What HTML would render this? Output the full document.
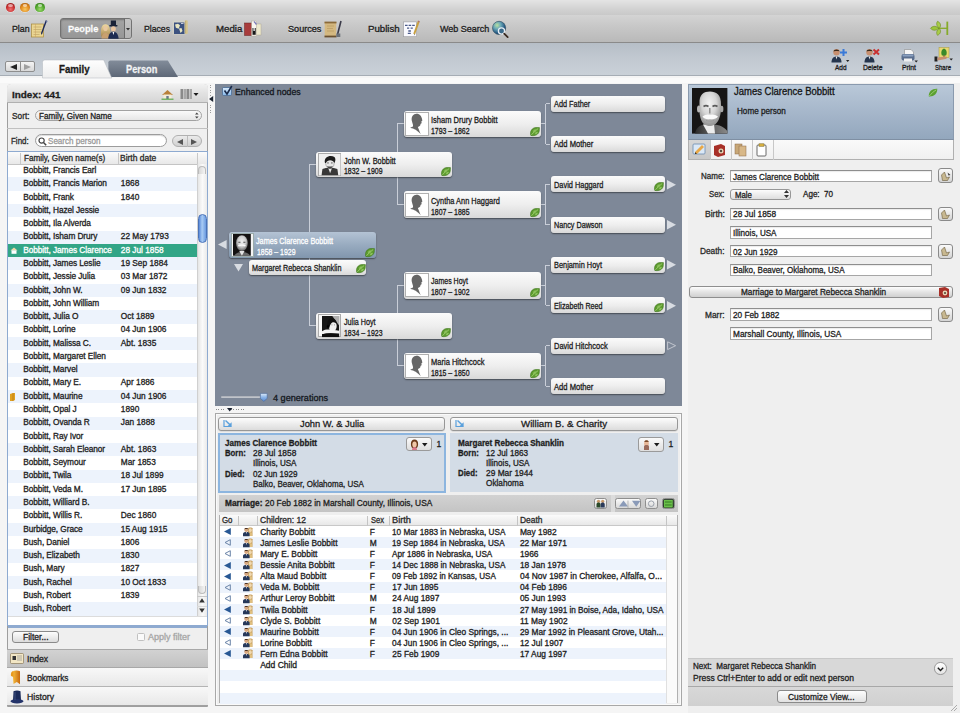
<!DOCTYPE html><html><head><meta charset="utf-8"><style>
*{margin:0;padding:0;box-sizing:border-box}
html,body{width:960px;height:713px;overflow:hidden;background:#f5f5f5;font-family:"Liberation Sans",sans-serif;color:#1e1e1e}
.ab{position:absolute}
.t{position:absolute;white-space:nowrap;line-height:1;transform-origin:0 50%;-webkit-text-stroke:0.3px currentColor}
svg{position:absolute;overflow:visible}
</style></head><body><div class="ab" style="left:0.00px;top:0.00px;width:960.00px;height:15.60px;background:linear-gradient(#e4e4e4,#d2d2d2 60%,#c9c9c9);border-bottom:1.2px solid #8c8c8c"></div><div class="ab" style="left:5.7px;top:2.8px;width:9.6px;height:9.6px;border-radius:50%;background:radial-gradient(circle at 50% 70%,#f07070 0,#c42a2a 55%,#7a1414 100%);box-shadow:0 0.5px 0.5px rgba(255,255,255,.6)"></div><div class="ab" style="left:8.2px;top:3.6px;width:4.6px;height:3px;border-radius:50%;background:rgba(255,255,255,.55)"></div><div class="ab" style="left:20.4px;top:2.8px;width:9.6px;height:9.6px;border-radius:50%;background:radial-gradient(circle at 50% 70%,#f8c860 0,#e0861a 55%,#8a4a0a 100%);box-shadow:0 0.5px 0.5px rgba(255,255,255,.6)"></div><div class="ab" style="left:22.9px;top:3.6px;width:4.6px;height:3px;border-radius:50%;background:rgba(255,255,255,.55)"></div><div class="ab" style="left:35.2px;top:2.8px;width:9.6px;height:9.6px;border-radius:50%;background:radial-gradient(circle at 50% 70%,#9ada6a 0,#4ea42a 55%,#2a6a14 100%);box-shadow:0 0.5px 0.5px rgba(255,255,255,.6)"></div><div class="ab" style="left:37.7px;top:3.6px;width:4.6px;height:3px;border-radius:50%;background:rgba(255,255,255,.55)"></div><div class="ab" style="left:0.00px;top:15.40px;width:960.00px;height:27.40px;background:linear-gradient(#d4d4d4,#c8c8c8 40%,#b9b9b9);border-bottom:1.4px solid #8a8a8a"></div><div class="ab" style="left:60.00px;top:18.00px;width:71.70px;height:21.40px;border-radius:3px;background:linear-gradient(#a4a4a4,#979797);border:1px solid #727272;box-shadow:inset 0 1px 2px rgba(0,0,0,.3),0 1px 0 rgba(255,255,255,.4)"></div><div class="ab" style="left:124.60px;top:19.00px;width:6.60px;height:19.40px;border-radius:0 2px 2px 0;background:linear-gradient(#c4c4c4,#b4b4b4)"></div><div class="ab" style="left:124.30px;top:19.00px;width:0.80px;height:19.40px;background:#6a6a6a"></div><svg style="left:126.00px;top:27.50px;" width="4.00" height="3.00" viewBox="0 0 4.00 3.00"><path d="M0 0h4l-2 2.5z" fill="#333"/></svg><div class="t" style="left:11.50px;top:25px;font-size:9.3px;font-weight:400;color:#222;transform:scaleX(0.940);text-shadow:0 0.5px 0 rgba(255,255,255,.5);-webkit-text-stroke:0.35px #222;">Plan</div><div class="t" style="left:67.70px;top:25px;font-size:9.3px;font-weight:700;color:#fff;transform:scaleX(0.994);text-shadow:0 -0.5px 0 rgba(0,0,0,.4);">People</div><div class="t" style="left:143.70px;top:25px;font-size:9.3px;font-weight:400;color:#222;transform:scaleX(0.932);text-shadow:0 0.5px 0 rgba(255,255,255,.5);-webkit-text-stroke:0.35px #222;">Places</div><div class="t" style="left:216.00px;top:25px;font-size:9.3px;font-weight:400;color:#222;transform:scaleX(1.038);text-shadow:0 0.5px 0 rgba(255,255,255,.5);-webkit-text-stroke:0.35px #222;">Media</div><div class="t" style="left:288.30px;top:25px;font-size:9.3px;font-weight:400;color:#222;transform:scaleX(0.979);text-shadow:0 0.5px 0 rgba(255,255,255,.5);-webkit-text-stroke:0.35px #222;">Sources</div><div class="t" style="left:368.30px;top:25px;font-size:9.3px;font-weight:400;color:#222;transform:scaleX(1.039);text-shadow:0 0.5px 0 rgba(255,255,255,.5);-webkit-text-stroke:0.35px #222;">Publish</div><div class="t" style="left:440.00px;top:25px;font-size:9.3px;font-weight:400;color:#222;transform:scaleX(0.967);text-shadow:0 0.5px 0 rgba(255,255,255,.5);-webkit-text-stroke:0.35px #222;">Web Search</div><svg style="left:31.00px;top:19.50px;" width="17.00" height="18.00" viewBox="0 0 17.00 18.00"><rect x="0.6" y="4" width="12" height="13" fill="#ead592" stroke="#a88a3a" stroke-width=".7"/><path d="M2.5 7h8M2.5 9.5h8M2.5 12h8M2.5 14.5h6" stroke="#c0a868" stroke-width=".7"/><path d="M4.5 4v13" stroke="#c8a060" stroke-width=".5"/><path d="M16 0.8l-4.6 12.5-1.4 1.6.1-2.2 4.6-12.5z" fill="#1e2a5a"/><path d="M15.6 0.5l1 .4-.6 1.6-1-.4z" fill="#6a7aa8"/></svg><svg style="left:100.00px;top:19.50px;" width="19.00" height="19.00" viewBox="0 0 19.00 19.00"><defs><linearGradient id="hb" x1="0" y1="0" x2="0" y2="1"><stop offset="0" stop-color="#f0dca0"/><stop offset="1" stop-color="#a88850"/></linearGradient></defs><path d="M1.2 16.5C0.5 10 1 4.2 5.5 4.2S10.5 10 9.8 16.5z" fill="url(#hb)"/><ellipse cx="5.5" cy="8.2" rx="2.2" ry="2.8" fill="#e8c8a0"/><path d="M1.5 18.5c.5-4 2-5.5 4-5.5s3.5 1.5 4 5.5z" fill="#c8a070"/><rect x="10.8" y="0.5" width="5.2" height="5" fill="#1a2238"/><rect x="9.3" y="5" width="8.2" height="1.4" rx=".6" fill="#1a2238"/><ellipse cx="13.4" cy="8.9" rx="2.4" ry="2.7" fill="#e8c4a0"/><path d="M8.2 18.8c.3-4.8 2.3-7 5.2-7s4.9 2.2 5.2 7z" fill="#1e2c52"/><path d="M12.5 11.9h1.8l-.9 3.2z" fill="#fff"/></svg><svg style="left:170.00px;top:19.50px;top:16px" width="18.00" height="17.00" viewBox="0 0 18.00 17.00"><rect x="2.5" y="4.5" width="13" height="14" fill="#d8d8c8" opacity=".6"/><rect x="4" y="6.5" width="10.5" height="11.5" fill="#3c5280"/><path d="M5 8.5l3-.8 2 1.5-1.3 3.5-2.8-1zM9 12.5l2.5-.5 1 3-2 2z" fill="#e8e6c0"/><path d="M11 7.5h2.5" stroke="#e8e8f0" stroke-width=".8"/><rect x="14.8" y="4.3" width="3" height="13.6" rx="1.2" fill="#d6c690"/><path d="M15.6 4.8v12.5" stroke="#a89860" stroke-width=".5"/></svg><svg style="left:240.50px;top:19.50px;top:16px" width="22.00" height="17.00" viewBox="0 0 22.00 17.00"><rect x="11.5" y="6.3" width="4" height="11" fill="#ece8d0" stroke="#b0a890" stroke-width=".4"/><rect x="10.5" y="4.5" width="5.5" height="15.5" fill="#f0f0f0" opacity=".3"/><rect x="3.5" y="7" width="7.5" height="12.5" fill="#a83c3c" stroke="#6a2020" stroke-width=".5"/><rect x="14.5" y="8" width="5.5" height="11" fill="#ece8cc" stroke="#a8a088" stroke-width=".4"/><rect x="10.5" y="5" width="5" height="15" fill="#f8f6f0" stroke="#a09880" stroke-width=".4"/><rect x="11.5" y="12" width="3.2" height="6.8" fill="#181818"/><rect x="12.4" y="12" width="1.4" height="3" fill="#e8e8e8"/><path d="M13 5.5l2.5 3" stroke="#7a7ab8" stroke-width="1.2"/></svg><svg style="left:324.00px;top:19.50px;" width="18.00" height="18.00" viewBox="0 0 18.00 18.00"><rect x="0.7" y="2" width="11.5" height="15" fill="#d4b880"/><rect x="0.5" y="1.6" width="12" height="1.8" fill="#8a6a3a"/><rect x="0.5" y="15.6" width="12" height="1.8" fill="#6a5030"/><path d="M3 6h7M3 8.5h6M3 11h7" stroke="#b89a60" stroke-width=".7"/><path d="M17 1l-3.5 13.5" stroke="#3a3a48" stroke-width="1.6"/><rect x="12.3" y="13.5" width="4" height="3.5" fill="#6a7078"/></svg><svg style="left:402.50px;top:19.50px;" width="18.00" height="18.00" viewBox="0 0 18.00 18.00"><rect x="0.6" y="1.9" width="13" height="14.8" fill="#fafaff" stroke="#9a9aa0" stroke-width=".6"/><path d="M2 5.3h2.6M5.6 5.3h2.6M9.2 5.3h2.6M4 8.2h2.2M7.6 8.2h2.2M5.3 11h2.6M4.8 13.4h3" stroke="#4a5a8a" stroke-width="1.3"/><path d="M15.8 1.2l-4.6 12.8" stroke="#c8a040" stroke-width="2"/><path d="M15.3 0.6l1.4.6-.5 1.2-1.4-.6z" fill="#b07070"/><path d="M11.2 14l-.3 1.6 1-1.2z" fill="#333"/></svg><svg style="left:491.00px;top:19.50px;" width="19.00" height="19.00" viewBox="0 0 19.00 19.00"><defs><radialGradient id="gl" cx=".35" cy=".3" r=".8"><stop offset="0" stop-color="#b8e0a0"/><stop offset=".35" stop-color="#6aa8b8"/><stop offset=".8" stop-color="#1a4a7a"/><stop offset="1" stop-color="#10304a"/></radialGradient></defs><circle cx="8.1" cy="7.9" r="6.6" fill="url(#gl)" stroke="#2a4a5a" stroke-width=".6"/><circle cx="10.5" cy="11" r="3.1" fill="#3a6a8a" stroke="#e8eef4" stroke-width="1.3"/><path d="M13.2 13.6l3.5 3.5" stroke="#3a2a20" stroke-width="1.8" stroke-linecap="round"/></svg><svg style="left:929.00px;top:20.00px;" width="20.00" height="17.00" viewBox="0 0 20.00 17.00"><path d="M9 8.3h9" stroke="#86aa2a" stroke-width="1.3"/><path d="M18.3 1.6v13.4" stroke="#86aa2a" stroke-width="1.8"/><path d="M1.5 8.3C3.5 5.8 7 5.6 10 8.3 7 11 3.5 10.8 1.5 8.3z" fill="#9cc43a" stroke="#6a8a1a" stroke-width=".6"/><path d="M10.5 8C7.5 6.5 7 3.5 8.5 1.3 11.5 2.6 12.5 5.5 10.5 8z" fill="#a8cc48" stroke="#6a8a1a" stroke-width=".6"/><path d="M10.5 8.6C7.5 10.1 7 13.1 8.5 15.3 11.5 14 12.5 11.1 10.5 8.6z" fill="#a8cc48" stroke="#6a8a1a" stroke-width=".6"/></svg><div class="ab" style="left:0.00px;top:42.80px;width:960.00px;height:33.20px;background:linear-gradient(#b6bec7,#c2c9d1 50%,#cad1d8);border-bottom:1.6px solid #a6adb5"></div><div class="ab" style="left:0.00px;top:77.60px;width:960.00px;height:5.00px;background:#fafafa"></div><div class="ab" style="left:5.20px;top:61.00px;width:30.20px;height:11.00px;border-radius:2px;background:linear-gradient(#f4f4f4,#d8d8d8);border:1px solid #8e8e8e"></div><div class="ab" style="left:20.20px;top:61.50px;width:0.80px;height:10.00px;background:#8e8e8e"></div><svg style="left:9.50px;top:63.50px;" width="8.00" height="6.00" viewBox="0 0 8.00 6.00"><path d="M7 0v6L0 3z" fill="#222"/></svg><svg style="left:24.00px;top:63.50px;" width="8.00" height="6.00" viewBox="0 0 8.00 6.00"><path d="M0 0v6l7-3z" fill="#a0a0a0"/></svg><svg style="left:0;top:0" width="960" height="80" viewBox="0 0 960 80"><defs><linearGradient id="gf" x1="0" y1="0" x2="0" y2="1"><stop offset="0" stop-color="#fefefe"/><stop offset="1" stop-color="#eeeeee"/></linearGradient><linearGradient id="gp" x1="0" y1="0" x2="0" y2="1"><stop offset="0" stop-color="#828c9a"/><stop offset="1" stop-color="#5e6877"/></linearGradient></defs><path d="M108.4 77V62.3Q108.4 60.5 110.4 60.5H167.8L178 77z" fill="url(#gp)"/><path d="M42.5 78V62.2Q42.5 60 44.7 60H103.7L111.8 78z" fill="url(#gf)" stroke="#b0b6bd" stroke-width=".5"/></svg><div class="t" style="left:59.40px;top:65px;font-size:10px;font-weight:700;color:#1a1a1a;transform:scaleX(0.966);">Family</div><div class="t" style="left:126.00px;top:65px;font-size:10px;font-weight:700;color:#f4f6f8;transform:scaleX(0.923);text-shadow:0 -0.5px 0 rgba(0,0,0,.35);">Person</div><svg style="left:831.00px;top:47.50px;" width="19.00" height="15.00" viewBox="0 0 19.00 15.00"><circle cx="5.5" cy="4.2" r="3.2" fill="#c89070"/><path d="M2.5 3.5c0-2.8 6-2.8 6 0c-1-.8-5-.8-6 0z" fill="#3a2a1a"/><path d="M0.5 14.5c0-4 2-6 5-6s5 2 5 6z" fill="#26364e"/><path d="M4.6 8.6l.9 3 .9-3z" fill="#e8e8e8"/><path d="M12.5 1v7M9 4.5h7" stroke="#3a7ad8" stroke-width="2"/><path d="M15 12h3.4l-1.7 2z" fill="#222"/></svg><div class="t" style="left:834.50px;top:64px;font-size:7.8px;font-weight:400;color:#1a1a1a;transform:scaleX(0.829);">Add</div><svg style="left:864.00px;top:47.50px;" width="19.00" height="15.00" viewBox="0 0 19.00 15.00"><circle cx="5.5" cy="4.2" r="3.2" fill="#c89070"/><path d="M2.5 3.5c0-2.8 6-2.8 6 0c-1-.8-5-.8-6 0z" fill="#3a2a1a"/><path d="M0.5 14.5c0-4 2-6 5-6s5 2 5 6z" fill="#26364e"/><path d="M4.6 8.6l.9 3 .9-3z" fill="#e8e8e8"/><path d="M9.5 1.5l5.5 5M15 1.5l-5.5 5" stroke="#c83030" stroke-width="2"/></svg><div class="t" style="left:863.00px;top:64px;font-size:7.8px;font-weight:400;color:#1a1a1a;transform:scaleX(0.865);">Delete</div><svg style="left:900.50px;top:48.50px;" width="17.00" height="14.00" viewBox="0 0 17.00 14.00"><path d="M3.5 0.5h6.5l2.5 2.5v3h-9z" fill="#f6f6f6" stroke="#8a8a8a" stroke-width=".6"/><rect x="0.5" y="5" width="13" height="6.5" rx="2" fill="#5a6e8e"/><rect x="1.5" y="5.5" width="11" height="2" rx="1" fill="#8aa0c0"/><rect x="3" y="9.5" width="8" height="3" fill="#f0f0f0"/><path d="M13.5 11.5h3.4l-1.7 2z" fill="#222"/></svg><div class="t" style="left:901.50px;top:64px;font-size:7.8px;font-weight:400;color:#1a1a1a;transform:scaleX(0.872);">Print</div><svg style="left:933.50px;top:47.00px;" width="19.00" height="16.00" viewBox="0 0 19.00 16.00"><rect x="5" y="0.5" width="10" height="10" fill="#e8d870" stroke="#a89a40" stroke-width=".5"/><path d="M10 1.5c-2.5 1-3.5 4-2 7h4c1.5-3 .5-6-2-7z" fill="#3a8a2a"/><path d="M10 8v3" stroke="#6a4a2a" stroke-width="1"/><path d="M0.5 9.5h3v5h-3z" fill="#222"/><path d="M3.5 10.5c3 0 5-1 8-1 2 0 2 2 0 2.5l-8 1.5z" fill="#c89070"/><path d="M15.5 11.5h3.4l-1.7 2z" fill="#222"/></svg><div class="t" style="left:935.00px;top:64px;font-size:7.8px;font-weight:400;color:#1a1a1a;transform:scaleX(0.769);">Share</div><div class="ab" style="left:6.50px;top:83.50px;width:201.50px;height:623.20px;background:#efefef;border:1px solid #9e9e9e;border-radius:4px 4px 0 0"></div><div class="ab" style="left:7.00px;top:84.00px;width:200.50px;height:19.00px;background:linear-gradient(#f2f2f2,#e2e2e2 50%,#d6d6d6);border-bottom:1px solid #b0b0b0;border-radius:4px 4px 0 0"></div><div class="t" style="left:11.70px;top:90px;font-size:9.5px;font-weight:700;color:#1e1e1e;transform:scaleX(1.044);">Index: 441</div><svg style="left:160.50px;top:88.50px;" width="13.00" height="11.00" viewBox="0 0 13.00 11.00"><path d="M1 6L6.5 1 12 6z" fill="#b8803a"/><rect x="2.5" y="5.5" width="8" height="4.5" fill="#f4ecd8"/><rect x="5.3" y="7" width="2.4" height="3" fill="#6a7a8a"/><rect x="0.5" y="9.6" width="12" height="1.2" fill="#5aa84a"/></svg><svg style="left:179.50px;top:89.00px;" width="19.00" height="10.00" viewBox="0 0 19.00 10.00"><rect x="0.5" y="0" width="2.5" height="10" fill="#8a8a8a"/><rect x="3.5" y="0" width="2.5" height="10" fill="#a8a8a8"/><rect x="6.5" y="0" width="2.5" height="10" fill="#8a8a8a"/><rect x="9.5" y="0" width="2.5" height="10" fill="#a8a8a8"/><path d="M13.5 4h5l-2.5 3z" fill="#1a1a1a"/></svg><div class="t" style="left:11.70px;top:112px;font-size:8.3px;font-weight:400;color:#2a2a2a;transform:scaleX(1.004);">Sort:</div><div class="ab" style="left:34.50px;top:110.30px;width:167.00px;height:10.50px;border-radius:6px;background:linear-gradient(#fafafa,#e6e6e6);border:1px solid #a2a2a2"></div><div class="t" style="left:39.20px;top:112px;font-size:8.3px;font-weight:400;color:#1e1e1e;transform:scaleX(0.977);">Family, Given Name</div><svg style="left:194.80px;top:112.30px;" width="3.60" height="7.00" viewBox="0 0 3.60 7.00"><path d="M0 2.6l1.8-2.2 1.8 2.2zM0 4.4l1.8 2.2 1.8-2.2z" fill="#444"/></svg><div class="ab" style="left:7.00px;top:128.00px;width:200.50px;height:1.00px;background:#c0c0c0"></div><div class="t" style="left:11.00px;top:137px;font-size:8.3px;font-weight:400;color:#2a2a2a;transform:scaleX(0.959);">Find:</div><div class="ab" style="left:34.50px;top:134.40px;width:132.00px;height:12.90px;border-radius:7px;background:#fff;border:1px solid #9c9c9c;box-shadow:inset 0 1px 1px rgba(0,0,0,.15)"></div><svg style="left:37.50px;top:136.80px;" width="9.00" height="9.00" viewBox="0 0 9.00 9.00"><circle cx="3.6" cy="3.6" r="2.6" stroke="#444" stroke-width="1.2" fill="none"/><path d="M5.5 5.5l2.7 2.7" stroke="#444" stroke-width="1.5"/></svg><div class="t" style="left:47.80px;top:137px;font-size:8.3px;font-weight:400;color:#9a9a9a;transform:scaleX(0.973);">Search person</div><div class="ab" style="left:172.00px;top:135.00px;width:29.70px;height:12.30px;border-radius:6px;background:linear-gradient(#ebebeb,#d0d0d0);border:1px solid #b0b0b0"></div><div class="ab" style="left:186.80px;top:135.50px;width:0.70px;height:11.30px;background:#bcbcbc"></div><svg style="left:176.50px;top:138.50px;" width="6.00" height="6.00" viewBox="0 0 6.00 6.00"><path d="M6 0v6L0 3z" fill="#555"/></svg><svg style="left:190.50px;top:138.50px;" width="6.00" height="6.00" viewBox="0 0 6.00 6.00"><path d="M0 0v6l6-3z" fill="#555"/></svg><div class="ab" style="left:6.50px;top:151.20px;width:201.50px;height:475.30px;background:#fff;border:1.2px solid #8eaad0"></div><div class="ab" style="left:7.50px;top:152.30px;width:199.50px;height:12.40px;background:linear-gradient(#fbfbfb,#e8e8e8);border-bottom:1px solid #c4c4c4"></div><div class="ab" style="left:20.30px;top:153.00px;width:0.70px;height:11.00px;background:#c8c8c8"></div><div class="ab" style="left:118.00px;top:153.00px;width:0.70px;height:11.00px;background:#c8c8c8"></div><div class="ab" style="left:196.80px;top:153.00px;width:0.70px;height:11.00px;background:#c8c8c8"></div><div class="t" style="left:23.80px;top:154px;font-size:8.3px;font-weight:400;color:#2a2a2a;transform:scaleX(0.980);">Family, Given name(s)</div><div class="t" style="left:119.70px;top:154px;font-size:8.3px;font-weight:400;color:#2a2a2a;transform:scaleX(1.019);">Birth date</div><div class="t" style="left:23.30px;top:166px;font-size:8.3px;font-weight:400;color:#1e1e1e;letter-spacing:-0.08px;">Bobbitt, Francis Earl</div><div class="ab" style="left:7.50px;top:177.48px;width:189.30px;height:13.28px;background:#edf3fc"></div><div class="t" style="left:23.30px;top:179px;font-size:8.3px;font-weight:400;color:#1e1e1e;letter-spacing:-0.08px;">Bobbitt, Francis Marion</div><div class="t" style="left:120.80px;top:179px;font-size:8.3px;font-weight:400;color:#1e1e1e;">1868</div><div class="t" style="left:23.30px;top:193px;font-size:8.3px;font-weight:400;color:#1e1e1e;letter-spacing:-0.08px;">Bobbitt, Frank</div><div class="t" style="left:120.80px;top:193px;font-size:8.3px;font-weight:400;color:#1e1e1e;">1840</div><div class="ab" style="left:7.50px;top:204.04px;width:189.30px;height:13.28px;background:#edf3fc"></div><div class="t" style="left:23.30px;top:206px;font-size:8.3px;font-weight:400;color:#1e1e1e;letter-spacing:-0.08px;">Bobbitt, Hazel Jessie</div><div class="t" style="left:23.30px;top:219px;font-size:8.3px;font-weight:400;color:#1e1e1e;letter-spacing:-0.08px;">Bobbitt, Ila Alverda</div><div class="ab" style="left:7.50px;top:230.60px;width:189.30px;height:13.28px;background:#edf3fc"></div><div class="t" style="left:23.30px;top:232px;font-size:8.3px;font-weight:400;color:#1e1e1e;letter-spacing:-0.08px;">Bobbitt, Isham Drury</div><div class="t" style="left:120.80px;top:232px;font-size:8.3px;font-weight:400;color:#1e1e1e;">22 May 1793</div><div class="ab" style="left:7.50px;top:243.88px;width:189.30px;height:13.28px;background:#32a586"></div><div class="t" style="left:23.30px;top:246px;font-size:8.3px;font-weight:400;color:#ffffff;letter-spacing:-0.08px;">Bobbitt, James Clarence</div><div class="t" style="left:120.80px;top:246px;font-size:8.3px;font-weight:400;color:#ffffff;">28 Jul 1858</div><div class="ab" style="left:7.50px;top:257.16px;width:189.30px;height:13.28px;background:#edf3fc"></div><div class="t" style="left:23.30px;top:259px;font-size:8.3px;font-weight:400;color:#1e1e1e;letter-spacing:-0.08px;">Bobbitt, James Leslie</div><div class="t" style="left:120.80px;top:259px;font-size:8.3px;font-weight:400;color:#1e1e1e;">19 Sep 1884</div><div class="t" style="left:23.30px;top:272px;font-size:8.3px;font-weight:400;color:#1e1e1e;letter-spacing:-0.08px;">Bobbitt, Jessie Julia</div><div class="t" style="left:120.80px;top:272px;font-size:8.3px;font-weight:400;color:#1e1e1e;">03 Mar 1872</div><div class="ab" style="left:7.50px;top:283.72px;width:189.30px;height:13.28px;background:#edf3fc"></div><div class="t" style="left:23.30px;top:286px;font-size:8.3px;font-weight:400;color:#1e1e1e;letter-spacing:-0.08px;">Bobbitt, John W.</div><div class="t" style="left:120.80px;top:286px;font-size:8.3px;font-weight:400;color:#1e1e1e;">09 Jun 1832</div><div class="t" style="left:23.30px;top:299px;font-size:8.3px;font-weight:400;color:#1e1e1e;letter-spacing:-0.08px;">Bobbitt, John William</div><div class="ab" style="left:7.50px;top:310.28px;width:189.30px;height:13.28px;background:#edf3fc"></div><div class="t" style="left:23.30px;top:312px;font-size:8.3px;font-weight:400;color:#1e1e1e;letter-spacing:-0.08px;">Bobbitt, Julia O</div><div class="t" style="left:120.80px;top:312px;font-size:8.3px;font-weight:400;color:#1e1e1e;">Oct 1889</div><div class="t" style="left:23.30px;top:325px;font-size:8.3px;font-weight:400;color:#1e1e1e;letter-spacing:-0.08px;">Bobbitt, Lorine</div><div class="t" style="left:120.80px;top:325px;font-size:8.3px;font-weight:400;color:#1e1e1e;">04 Jun 1906</div><div class="ab" style="left:7.50px;top:336.84px;width:189.30px;height:13.28px;background:#edf3fc"></div><div class="t" style="left:23.30px;top:339px;font-size:8.3px;font-weight:400;color:#1e1e1e;letter-spacing:-0.08px;">Bobbitt, Malissa C.</div><div class="t" style="left:120.80px;top:339px;font-size:8.3px;font-weight:400;color:#1e1e1e;">Abt. 1835</div><div class="t" style="left:23.30px;top:352px;font-size:8.3px;font-weight:400;color:#1e1e1e;letter-spacing:-0.08px;">Bobbitt, Margaret Ellen</div><div class="ab" style="left:7.50px;top:363.40px;width:189.30px;height:13.28px;background:#edf3fc"></div><div class="t" style="left:23.30px;top:365px;font-size:8.3px;font-weight:400;color:#1e1e1e;letter-spacing:-0.08px;">Bobbitt, Marvel</div><div class="t" style="left:23.30px;top:378px;font-size:8.3px;font-weight:400;color:#1e1e1e;letter-spacing:-0.08px;">Bobbitt, Mary E.</div><div class="t" style="left:120.80px;top:378px;font-size:8.3px;font-weight:400;color:#1e1e1e;">Apr 1886</div><div class="ab" style="left:7.50px;top:389.96px;width:189.30px;height:13.28px;background:#edf3fc"></div><div class="t" style="left:23.30px;top:392px;font-size:8.3px;font-weight:400;color:#1e1e1e;letter-spacing:-0.08px;">Bobbitt, Maurine</div><div class="t" style="left:120.80px;top:392px;font-size:8.3px;font-weight:400;color:#1e1e1e;">04 Jun 1906</div><div class="t" style="left:23.30px;top:405px;font-size:8.3px;font-weight:400;color:#1e1e1e;letter-spacing:-0.08px;">Bobbitt, Opal J</div><div class="t" style="left:120.80px;top:405px;font-size:8.3px;font-weight:400;color:#1e1e1e;">1890</div><div class="ab" style="left:7.50px;top:416.52px;width:189.30px;height:13.28px;background:#edf3fc"></div><div class="t" style="left:23.30px;top:418px;font-size:8.3px;font-weight:400;color:#1e1e1e;letter-spacing:-0.08px;">Bobbitt, Ovanda R</div><div class="t" style="left:120.80px;top:418px;font-size:8.3px;font-weight:400;color:#1e1e1e;">Jan 1888</div><div class="t" style="left:23.30px;top:432px;font-size:8.3px;font-weight:400;color:#1e1e1e;letter-spacing:-0.08px;">Bobbitt, Ray Ivor</div><div class="ab" style="left:7.50px;top:443.08px;width:189.30px;height:13.28px;background:#edf3fc"></div><div class="t" style="left:23.30px;top:445px;font-size:8.3px;font-weight:400;color:#1e1e1e;letter-spacing:-0.08px;">Bobbitt, Sarah Eleanor</div><div class="t" style="left:120.80px;top:445px;font-size:8.3px;font-weight:400;color:#1e1e1e;">Abt. 1863</div><div class="t" style="left:23.30px;top:458px;font-size:8.3px;font-weight:400;color:#1e1e1e;letter-spacing:-0.08px;">Bobbitt, Seymour</div><div class="t" style="left:120.80px;top:458px;font-size:8.3px;font-weight:400;color:#1e1e1e;">Mar 1853</div><div class="ab" style="left:7.50px;top:469.64px;width:189.30px;height:13.28px;background:#edf3fc"></div><div class="t" style="left:23.30px;top:471px;font-size:8.3px;font-weight:400;color:#1e1e1e;letter-spacing:-0.08px;">Bobbitt, Twila</div><div class="t" style="left:120.80px;top:471px;font-size:8.3px;font-weight:400;color:#1e1e1e;">18 Jul 1899</div><div class="t" style="left:23.30px;top:485px;font-size:8.3px;font-weight:400;color:#1e1e1e;letter-spacing:-0.08px;">Bobbitt, Veda M.</div><div class="t" style="left:120.80px;top:485px;font-size:8.3px;font-weight:400;color:#1e1e1e;">17 Jun 1895</div><div class="ab" style="left:7.50px;top:496.20px;width:189.30px;height:13.28px;background:#edf3fc"></div><div class="t" style="left:23.30px;top:498px;font-size:8.3px;font-weight:400;color:#1e1e1e;letter-spacing:-0.08px;">Bobbitt, Williard B.</div><div class="t" style="left:23.30px;top:511px;font-size:8.3px;font-weight:400;color:#1e1e1e;letter-spacing:-0.08px;">Bobbitt, Willis R.</div><div class="t" style="left:120.80px;top:511px;font-size:8.3px;font-weight:400;color:#1e1e1e;">Dec 1860</div><div class="ab" style="left:7.50px;top:522.76px;width:189.30px;height:13.28px;background:#edf3fc"></div><div class="t" style="left:23.30px;top:525px;font-size:8.3px;font-weight:400;color:#1e1e1e;letter-spacing:-0.08px;">Burbidge, Grace</div><div class="t" style="left:120.80px;top:525px;font-size:8.3px;font-weight:400;color:#1e1e1e;">15 Aug 1915</div><div class="t" style="left:23.30px;top:538px;font-size:8.3px;font-weight:400;color:#1e1e1e;letter-spacing:-0.08px;">Bush, Daniel</div><div class="t" style="left:120.80px;top:538px;font-size:8.3px;font-weight:400;color:#1e1e1e;">1806</div><div class="ab" style="left:7.50px;top:549.32px;width:189.30px;height:13.28px;background:#edf3fc"></div><div class="t" style="left:23.30px;top:551px;font-size:8.3px;font-weight:400;color:#1e1e1e;letter-spacing:-0.08px;">Bush, Elizabeth</div><div class="t" style="left:120.80px;top:551px;font-size:8.3px;font-weight:400;color:#1e1e1e;">1830</div><div class="t" style="left:23.30px;top:564px;font-size:8.3px;font-weight:400;color:#1e1e1e;letter-spacing:-0.08px;">Bush, Mary</div><div class="t" style="left:120.80px;top:564px;font-size:8.3px;font-weight:400;color:#1e1e1e;">1827</div><div class="ab" style="left:7.50px;top:575.88px;width:189.30px;height:13.28px;background:#edf3fc"></div><div class="t" style="left:23.30px;top:578px;font-size:8.3px;font-weight:400;color:#1e1e1e;letter-spacing:-0.08px;">Bush, Rachel</div><div class="t" style="left:120.80px;top:578px;font-size:8.3px;font-weight:400;color:#1e1e1e;">10 Oct 1833</div><div class="t" style="left:23.30px;top:591px;font-size:8.3px;font-weight:400;color:#1e1e1e;letter-spacing:-0.08px;">Bush, Robert</div><div class="t" style="left:120.80px;top:591px;font-size:8.3px;font-weight:400;color:#1e1e1e;">1839</div><div class="ab" style="left:7.50px;top:602.44px;width:189.30px;height:13.28px;background:#edf3fc"></div><div class="t" style="left:23.30px;top:604px;font-size:8.3px;font-weight:400;color:#1e1e1e;letter-spacing:-0.08px;">Bush, Robert</div><svg style="left:9.50px;top:246.50px;" width="8.00" height="7.00" viewBox="0 0 8.00 7.00"><path d="M0.5 3.5L4 0.5 7.5 3.5z" fill="#f0d8a8"/><rect x="1.5" y="3.3" width="5" height="3.5" fill="#fff"/></svg><svg style="left:10.00px;top:392.96px;" width="5.00" height="8.00" viewBox="0 0 5.00 8.00"><path d="M0 1l3-1h2v7l-2 1H0z" fill="#e0a020"/><path d="M3 0v8" stroke="#b07010" stroke-width=".6"/></svg><div class="ab" style="left:196.80px;top:164.40px;width:10.50px;height:451.60px;background:linear-gradient(90deg,#e6e6e6,#fafafa 50%,#eaeaea);border-left:1px solid #d0d0d0"></div><div class="ab" style="left:198.00px;top:166.00px;width:8.00px;height:8.00px;border-radius:4px 4px 0 0;background:linear-gradient(90deg,#d8d8d8,#f4f4f4);border:1px solid #bbb;border-bottom:none"></div><div class="ab" style="left:197.60px;top:213.50px;width:9.00px;height:29.00px;border-radius:4.5px;background:linear-gradient(90deg,#5a8ad8,#a8cbf4 45%,#6a9ae0);border:1px solid #4a72b8"></div><div class="ab" style="left:198.00px;top:586.00px;width:8.00px;height:8.00px;border-radius:0 0 4px 4px;background:linear-gradient(90deg,#d8d8d8,#f4f4f4);border:1px solid #bbb;border-top:none"></div><div class="ab" style="left:197.20px;top:595.50px;width:10.00px;height:0.80px;background:#c8c8c8"></div><svg style="left:199.00px;top:598.00px;" width="6.00" height="5.00" viewBox="0 0 6.00 5.00"><path d="M3 0.3L5.8 4.6H0.2z" fill="#333"/></svg><div class="ab" style="left:197.20px;top:605.80px;width:10.00px;height:0.80px;background:#d8d8d8"></div><svg style="left:199.00px;top:607.50px;" width="6.00" height="5.00" viewBox="0 0 6.00 5.00"><path d="M3 4.7L5.8 0.4H0.2z" fill="#333"/></svg><div class="ab" style="left:7.50px;top:616.00px;width:199.50px;height:0.80px;background:#dcdcdc"></div><div class="ab" style="left:7.50px;top:626.00px;width:199.50px;height:1.60px;background:#8eaad0"></div><div class="ab" style="left:12.40px;top:630.50px;width:46.60px;height:12.10px;border-radius:3px;background:linear-gradient(#fdfdfd,#dcdcdc);border:1px solid #8a8a8a"></div><div class="t" style="left:22.50px;top:633px;font-size:8.3px;font-weight:400;color:#1e1e1e;transform:scaleX(1.024);">Filter...</div><div class="ab" style="left:136.50px;top:632.50px;width:8.00px;height:8.00px;border-radius:1.5px;background:#fafafa;border:1px solid #c0c0c0"></div><div class="t" style="left:148.00px;top:633px;font-size:8.3px;font-weight:400;color:#a6a6a6;transform:scaleX(1.084);">Apply filter</div><div class="ab" style="left:7.00px;top:648.60px;width:200.50px;height:19.00px;background:linear-gradient(#d2d2d2,#c2c2c2);border-top:1px solid #a8a8a8;border-bottom:1px solid #a8a8a8"></div><div class="ab" style="left:7.00px;top:667.60px;width:200.50px;height:19.00px;background:linear-gradient(#f8f8f8,#e8e8e8);border-bottom:1px solid #b4b4b4"></div><div class="ab" style="left:7.00px;top:686.60px;width:200.50px;height:19.40px;background:linear-gradient(#f8f8f8,#e8e8e8);border-bottom:1px solid #a0a0a0"></div><svg style="left:10.00px;top:653.00px;" width="14.00" height="11.00" viewBox="0 0 14.00 11.00"><rect x="0.5" y="0.5" width="13" height="10" rx="1" fill="#f2e6c4" stroke="#8a7a5a" stroke-width=".7"/><rect x="2.5" y="3" width="3.5" height="4" fill="#333"/><path d="M7 3h5M7 5h5M7 7h5" stroke="#999" stroke-width=".8"/></svg><div class="t" style="left:27.00px;top:655px;font-size:8.6px;font-weight:400;color:#1e1e1e;transform:scaleX(0.999);">Index</div><svg style="left:9.50px;top:670.00px;" width="11.00" height="15.00" viewBox="0 0 11.00 15.00"><defs><linearGradient id="bm" x1="0" y1="0" x2="1" y2="0"><stop offset="0" stop-color="#f8c040"/><stop offset="1" stop-color="#c86a10"/></linearGradient></defs><path d="M2.5 1.2c2.5-1 5.5-1 7.5 0v13l-3.2-2.2L3.5 14z" fill="url(#bm)"/><path d="M2.5 1.2C1 2 0.6 4 1 6l2.5 1V2z" fill="#e89a20"/></svg><div class="t" style="left:27.00px;top:674px;font-size:8.6px;font-weight:400;color:#1e1e1e;transform:scaleX(0.965);">Bookmarks</div><svg style="left:9.50px;top:689.50px;" width="14.00" height="14.00" viewBox="0 0 14.00 14.00"><path d="M3.5 1.2c2-.8 5-.8 7 0l.5 9.5h-8z" fill="#1c2c5a"/><ellipse cx="7" cy="11.2" rx="6.5" ry="2.2" fill="#24346a"/><path d="M5 2v8" stroke="#4a5a8a" stroke-width=".8"/></svg><div class="t" style="left:27.00px;top:693px;font-size:8.6px;font-weight:400;color:#1e1e1e;transform:scaleX(1.009);">History</div><div class="ab" style="left:214.80px;top:83.50px;width:467.00px;height:322.40px;background:#7e8898"></div><div class="ab" style="left:222.30px;top:86.50px;width:9.30px;height:9.30px;border-radius:1.5px;background:linear-gradient(#d6e8fa,#8cbcec);border:1px solid #5a7aa0"></div><svg style="left:223.00px;top:84.50px;" width="10.00" height="11.00" viewBox="0 0 10.00 11.00"><path d="M1.5 5.5l2.5 3.5L8.8 1" stroke="#1a2a4a" stroke-width="1.6" fill="none"/></svg><div class="t" style="left:234.50px;top:88px;font-size:8.8px;font-weight:400;color:#141820;transform:scaleX(0.995);">Enhanced nodes</div><div class="ab" style="left:545.10px;top:103.70px;width:1.00px;height:40.35px;background:#c9ced8"></div><div class="ab" style="left:541.00px;top:123.38px;width:4.60px;height:1.00px;background:#c9ced8"></div><div class="ab" style="left:545.60px;top:103.20px;width:4.90px;height:1.00px;background:#c9ced8"></div><div class="ab" style="left:545.60px;top:143.55px;width:4.90px;height:1.00px;background:#c9ced8"></div><div class="ab" style="left:545.10px;top:184.40px;width:1.00px;height:40.35px;background:#c9ced8"></div><div class="ab" style="left:541.00px;top:204.07px;width:4.60px;height:1.00px;background:#c9ced8"></div><div class="ab" style="left:545.60px;top:183.90px;width:4.90px;height:1.00px;background:#c9ced8"></div><div class="ab" style="left:545.60px;top:224.25px;width:4.90px;height:1.00px;background:#c9ced8"></div><div class="ab" style="left:545.10px;top:265.10px;width:1.00px;height:40.35px;background:#c9ced8"></div><div class="ab" style="left:541.00px;top:284.77px;width:4.60px;height:1.00px;background:#c9ced8"></div><div class="ab" style="left:545.60px;top:264.60px;width:4.90px;height:1.00px;background:#c9ced8"></div><div class="ab" style="left:545.60px;top:304.95px;width:4.90px;height:1.00px;background:#c9ced8"></div><div class="ab" style="left:545.10px;top:345.80px;width:1.00px;height:40.35px;background:#c9ced8"></div><div class="ab" style="left:541.00px;top:365.48px;width:4.60px;height:1.00px;background:#c9ced8"></div><div class="ab" style="left:545.60px;top:345.30px;width:4.90px;height:1.00px;background:#c9ced8"></div><div class="ab" style="left:545.60px;top:385.65px;width:4.90px;height:1.00px;background:#c9ced8"></div><div class="ab" style="left:396.50px;top:123.88px;width:1.00px;height:80.70px;background:#c9ced8"></div><div class="ab" style="left:397.00px;top:123.38px;width:6.60px;height:1.00px;background:#c9ced8"></div><div class="ab" style="left:397.00px;top:204.07px;width:6.60px;height:1.00px;background:#c9ced8"></div><div class="ab" style="left:396.50px;top:285.27px;width:1.00px;height:80.70px;background:#c9ced8"></div><div class="ab" style="left:397.00px;top:284.77px;width:6.60px;height:1.00px;background:#c9ced8"></div><div class="ab" style="left:397.00px;top:365.48px;width:6.60px;height:1.00px;background:#c9ced8"></div><div class="ab" style="left:308.50px;top:164.22px;width:1.00px;height:161.40px;background:#c9ced8"></div><div class="ab" style="left:309.00px;top:163.72px;width:7.00px;height:1.00px;background:#c9ced8"></div><div class="ab" style="left:309.00px;top:325.12px;width:7.00px;height:1.00px;background:#c9ced8"></div><div class="ab" style="left:228.70px;top:231.60px;width:147.30px;height:26.30px;border-radius:3px;background:linear-gradient(#b4c3d4,#98abc0 50%,#8196ad);box-shadow:0 1px 1.5px rgba(0,0,0,.45);"></div><div class="ab" style="left:230.50px;top:232.90px;width:23.40px;height:23.70px;background:#f4f4f4;border:.6px solid #9aa"></div><svg style="left:233.30px;top:233.90px;" width="17.80" height="21.70" viewBox="0 0 17.80 21.70"><defs><radialGradient id="jcf" cx=".5" cy=".4" r=".55"><stop offset="0" stop-color="#f0f0f0"/><stop offset=".6" stop-color="#cfcfcf"/><stop offset="1" stop-color="#777"/></radialGradient></defs><rect width="17.799999999999997" height="21.69999999999998" fill="#141212"/><path d="M1.7799999999999998 21.69999999999998C2.6699999999999995 16.925999999999988 15.129999999999997 16.925999999999988 16.909999999999997 21.69999999999998z" fill="#6a6a6a"/><path d="M6.229999999999999 16.925999999999988L8.899999999999999 21.69999999999998 11.569999999999999 16.925999999999988z" fill="#e4e4e4"/><ellipse cx="8.899999999999999" cy="9.113999999999992" rx="5.874" ry="7.811999999999993" fill="url(#jcf)"/><path d="M5.339999999999999 11.934999999999992c1.7799999999999998 -1.084999999999999 5.339999999999999 -1.084999999999999 7.119999999999999 0" stroke="#fafafa" stroke-width="1.5189999999999988" fill="none"/><path d="M5.339999999999999 8.245999999999993h2.1359999999999997M10.323999999999998 8.245999999999993h2.1359999999999997" stroke="#555" stroke-width="1.084999999999999"/></svg><div class="t" style="left:256.20px;top:237px;font-size:9.2px;font-weight:400;color:#fff;transform:scaleX(0.789);">James Clarence Bobbitt</div><div class="t" style="left:256.50px;top:248px;font-size:9.2px;font-weight:400;color:#fff;transform:scaleX(0.754);">1858 – 1929</div><svg style="left:364.80px;top:247.60px;" width="9.60" height="8.80" viewBox="0 0 9.60 8.80"><path d="M0.8 8.4C-0.3 4.5 2 0.6 6 0.6 7.5 0.6 8.8 0.6 9.4 0.6 9.4 1.5 9.4 2.8 9.2 4 8.8 7.2 5.2 9.4 0.8 8.4z" fill="#5e9c30" stroke="#3a721a" stroke-width=".6"/><path d="M1.4 7.8C3.4 5.6 5.6 3.4 8.2 1.5" stroke="#a8d478" stroke-width=".8" fill="none"/><ellipse cx="4.6" cy="3.8" rx="1.8" ry="1.1" transform="rotate(-40 4.6 3.8)" fill="#8cc05c"/><ellipse cx="6.4" cy="6" rx="1.6" ry="1" transform="rotate(-40 6.4 6)" fill="#8cc05c"/></svg><div class="ab" style="left:248.70px;top:260.40px;width:117.30px;height:14.30px;border-radius:3px;background:linear-gradient(#fbfbfb,#eeeeee 50%,#d9d9d9);box-shadow:0 1px 1.5px rgba(0,0,0,.45);"></div><div class="t" style="left:251.80px;top:264px;font-size:9.2px;font-weight:400;color:#1a1a1a;transform:scaleX(0.789);">Margaret Rebecca Shanklin</div><svg style="left:355.80px;top:263.50px;" width="9.60" height="8.80" viewBox="0 0 9.60 8.80"><path d="M0.8 8.4C-0.3 4.5 2 0.6 6 0.6 7.5 0.6 8.8 0.6 9.4 0.6 9.4 1.5 9.4 2.8 9.2 4 8.8 7.2 5.2 9.4 0.8 8.4z" fill="#5e9c30" stroke="#3a721a" stroke-width=".6"/><path d="M1.4 7.8C3.4 5.6 5.6 3.4 8.2 1.5" stroke="#a8d478" stroke-width=".8" fill="none"/><ellipse cx="4.6" cy="3.8" rx="1.8" ry="1.1" transform="rotate(-40 4.6 3.8)" fill="#8cc05c"/><ellipse cx="6.4" cy="6" rx="1.6" ry="1" transform="rotate(-40 6.4 6)" fill="#8cc05c"/></svg><svg style="left:218.00px;top:239.80px;" width="9.00" height="9.00" viewBox="0 0 9.00 9.00"><path d="M8.6 0v9L0 4.5z" fill="#d8dce2"/></svg><svg style="left:234.00px;top:264.00px;" width="9.00" height="8.00" viewBox="0 0 9.00 8.00"><path d="M0 0h9L4.5 7.6z" fill="#d8dce2"/></svg><div class="ab" style="left:316.00px;top:151.60px;width:136.00px;height:25.90px;border-radius:3px;background:linear-gradient(#fbfbfb,#eeeeee 50%,#d9d9d9);box-shadow:0 1px 1.5px rgba(0,0,0,.45);"></div><div class="ab" style="left:317.80px;top:152.90px;width:23.40px;height:23.30px;background:#f8f8f8;border:.6px solid #aaa"></div><svg style="left:318.80px;top:153.90px;" width="21.40" height="21.30" viewBox="0 0 21.40 21.30"><rect width="21.4" height="21.300000000000004" fill="#f0f0f0"/><path d="M2.5679999999999996 21.300000000000004L3.424 14.910000000000002C7.489999999999999 13.206000000000003 13.91 13.206000000000003 18.404 14.910000000000002L19.259999999999998 21.300000000000004z" fill="#383838"/><path d="M9.415999999999999 14.484000000000004L11.128 19.170000000000005 12.839999999999998 14.484000000000004z" fill="#e8e8e8"/><ellipse cx="10.914" cy="9.159000000000002" rx="4.28" ry="5.325000000000001" fill="#e6e6e6" stroke="#777" stroke-width=".5"/><path d="M5.992 8.946000000000002C4.28 2.5560000000000005 11.77 0.4260000000000001 15.407999999999998 2.982000000000001C17.12 4.686000000000001 16.264 7.668000000000001 15.407999999999998 8.946000000000002C14.124 5.538000000000001 8.56 5.112000000000001 6.848 8.946000000000002z" fill="#1e1e1e"/><path d="M8.132 8.946000000000002h1.712M11.984 8.946000000000002h1.712" stroke="#555" stroke-width=".9"/><path d="M8.132 11.928000000000004C8.988 15.336000000000002 12.839999999999998 15.336000000000002 13.696 11.928000000000004C11.984 12.780000000000003 9.844 12.780000000000003 8.132 11.928000000000004z" fill="#444"/></svg><div class="t" style="left:343.50px;top:157px;font-size:9.2px;font-weight:400;color:#1a1a1a;transform:scaleX(0.802);">John W. Bobbitt</div><div class="t" style="left:343.80px;top:167px;font-size:9.2px;font-weight:400;color:#1a1a1a;transform:scaleX(0.754);">1832 – 1909</div><svg style="left:440.80px;top:167.20px;" width="9.60" height="8.80" viewBox="0 0 9.60 8.80"><path d="M0.8 8.4C-0.3 4.5 2 0.6 6 0.6 7.5 0.6 8.8 0.6 9.4 0.6 9.4 1.5 9.4 2.8 9.2 4 8.8 7.2 5.2 9.4 0.8 8.4z" fill="#5e9c30" stroke="#3a721a" stroke-width=".6"/><path d="M1.4 7.8C3.4 5.6 5.6 3.4 8.2 1.5" stroke="#a8d478" stroke-width=".8" fill="none"/><ellipse cx="4.6" cy="3.8" rx="1.8" ry="1.1" transform="rotate(-40 4.6 3.8)" fill="#8cc05c"/><ellipse cx="6.4" cy="6" rx="1.6" ry="1" transform="rotate(-40 6.4 6)" fill="#8cc05c"/></svg><div class="ab" style="left:316.00px;top:312.60px;width:136.00px;height:26.10px;border-radius:3px;background:linear-gradient(#fbfbfb,#eeeeee 50%,#d9d9d9);box-shadow:0 1px 1.5px rgba(0,0,0,.45);"></div><div class="ab" style="left:317.80px;top:313.90px;width:23.40px;height:23.50px;background:#f8f8f8;border:.6px solid #aaa"></div><svg style="left:321.70px;top:315.50px;" width="17.10" height="21.10" viewBox="0 0 17.10 21.10"><rect width="17.099999999999998" height="21.099999999999966" fill="#161616"/><path d="M10.259999999999998 0H17.099999999999998V9.494999999999985z" fill="#b0b0b0"/><ellipse cx="10.601999999999999" cy="9.916999999999984" rx="4.103999999999999" ry="5.907999999999991" fill="#efefef"/><path d="M5.129999999999999 10.549999999999983C4.788 3.1649999999999947 8.549999999999999 1.6879999999999973 11.286 2.531999999999996C14.021999999999997 3.3759999999999946 15.047999999999998 6.329999999999989 14.705999999999998 8.439999999999987C12.825 5.063999999999992 8.549999999999999 4.641999999999992 7.181999999999999 12.659999999999979z" fill="#101010"/><circle cx="5.9849999999999985" cy="10.549999999999983" r="1.197" fill="#000"/><path d="M9.405 8.861999999999986h1.0259999999999998M11.969999999999997 8.861999999999986h1.0259999999999998" stroke="#777" stroke-width=".7"/><path d="M0 15.191999999999975C4.2749999999999995 12.23799999999998 10.259999999999998 13.925999999999979 17.099999999999998 14.769999999999975V17.723999999999972C10.259999999999998 16.879999999999974 5.129999999999999 16.879999999999974 0 18.14599999999997z" fill="#f2f2f2"/><path d="M0 18.14599999999997C5.129999999999999 16.879999999999974 10.259999999999998 16.879999999999974 17.099999999999998 17.723999999999972V21.099999999999966H0z" fill="#0e0e0e"/></svg><div class="t" style="left:343.50px;top:318px;font-size:9.2px;font-weight:400;color:#1a1a1a;transform:scaleX(0.781);">Julia Hoyt</div><div class="t" style="left:343.80px;top:329px;font-size:9.2px;font-weight:400;color:#1a1a1a;transform:scaleX(0.754);">1834 – 1923</div><svg style="left:440.80px;top:328.40px;" width="9.60" height="8.80" viewBox="0 0 9.60 8.80"><path d="M0.8 8.4C-0.3 4.5 2 0.6 6 0.6 7.5 0.6 8.8 0.6 9.4 0.6 9.4 1.5 9.4 2.8 9.2 4 8.8 7.2 5.2 9.4 0.8 8.4z" fill="#5e9c30" stroke="#3a721a" stroke-width=".6"/><path d="M1.4 7.8C3.4 5.6 5.6 3.4 8.2 1.5" stroke="#a8d478" stroke-width=".8" fill="none"/><ellipse cx="4.6" cy="3.8" rx="1.8" ry="1.1" transform="rotate(-40 4.6 3.8)" fill="#8cc05c"/><ellipse cx="6.4" cy="6" rx="1.6" ry="1" transform="rotate(-40 6.4 6)" fill="#8cc05c"/></svg><div class="ab" style="left:403.60px;top:110.58px;width:137.40px;height:26.60px;border-radius:3px;background:linear-gradient(#fbfbfb,#eeeeee 50%,#d9d9d9);box-shadow:0 1px 1.5px rgba(0,0,0,.45);"></div><div class="ab" style="left:405.40px;top:111.88px;width:23.40px;height:24.00px;background:#fff;border:.8px solid #b0b0b0"></div><svg style="left:405.40px;top:111.88px;" width="23.40" height="24.00" viewBox="0 0 23.40 24.00"><path d="M15.68 22.32 L12.87 15.12 C14.51 14.40 15.91 13.44 15.44 12.00 L16.85 11.04 L16.15 9.84 L17.32 8.64 C16.85 3.60 14.04 1.20 10.53 1.92 C7.02 2.40 6.08 6.00 7.02 9.60 C7.49 12.00 8.42 13.20 7.96 14.40 L5.15 15.84 C9.36 16.80 12.17 18.24 15.68 22.32Z" fill="#666"/></svg><div class="t" style="left:431.10px;top:116px;font-size:9.2px;font-weight:400;color:#1a1a1a;transform:scaleX(0.819);">Isham Drury Bobbitt</div><div class="t" style="left:431.40px;top:127px;font-size:9.2px;font-weight:400;color:#1a1a1a;transform:scaleX(0.754);">1793 – 1862</div><svg style="left:529.80px;top:126.88px;" width="9.60" height="8.80" viewBox="0 0 9.60 8.80"><path d="M0.8 8.4C-0.3 4.5 2 0.6 6 0.6 7.5 0.6 8.8 0.6 9.4 0.6 9.4 1.5 9.4 2.8 9.2 4 8.8 7.2 5.2 9.4 0.8 8.4z" fill="#5e9c30" stroke="#3a721a" stroke-width=".6"/><path d="M1.4 7.8C3.4 5.6 5.6 3.4 8.2 1.5" stroke="#a8d478" stroke-width=".8" fill="none"/><ellipse cx="4.6" cy="3.8" rx="1.8" ry="1.1" transform="rotate(-40 4.6 3.8)" fill="#8cc05c"/><ellipse cx="6.4" cy="6" rx="1.6" ry="1" transform="rotate(-40 6.4 6)" fill="#8cc05c"/></svg><div class="ab" style="left:403.60px;top:191.27px;width:137.40px;height:26.60px;border-radius:3px;background:linear-gradient(#fbfbfb,#eeeeee 50%,#d9d9d9);box-shadow:0 1px 1.5px rgba(0,0,0,.45);"></div><div class="ab" style="left:405.40px;top:192.57px;width:23.40px;height:24.00px;background:#fff;border:.8px solid #b0b0b0"></div><svg style="left:405.40px;top:192.57px;" width="23.40" height="24.00" viewBox="0 0 23.40 24.00"><path d="M15.68 22.32 L12.87 15.12 C14.51 14.40 15.91 13.44 15.44 12.00 L16.85 11.04 L16.15 9.84 L17.32 8.64 C16.85 3.60 14.04 1.20 10.53 1.92 C7.02 2.40 6.08 6.00 7.02 9.60 C7.49 12.00 8.42 13.20 7.96 14.40 L5.15 15.84 C9.36 16.80 12.17 18.24 15.68 22.32Z" fill="#666"/></svg><div class="t" style="left:431.10px;top:197px;font-size:9.2px;font-weight:400;color:#1a1a1a;transform:scaleX(0.806);">Cyntha Ann Haggard</div><div class="t" style="left:431.40px;top:208px;font-size:9.2px;font-weight:400;color:#1a1a1a;transform:scaleX(0.754);">1807 – 1885</div><svg style="left:529.80px;top:207.57px;" width="9.60" height="8.80" viewBox="0 0 9.60 8.80"><path d="M0.8 8.4C-0.3 4.5 2 0.6 6 0.6 7.5 0.6 8.8 0.6 9.4 0.6 9.4 1.5 9.4 2.8 9.2 4 8.8 7.2 5.2 9.4 0.8 8.4z" fill="#5e9c30" stroke="#3a721a" stroke-width=".6"/><path d="M1.4 7.8C3.4 5.6 5.6 3.4 8.2 1.5" stroke="#a8d478" stroke-width=".8" fill="none"/><ellipse cx="4.6" cy="3.8" rx="1.8" ry="1.1" transform="rotate(-40 4.6 3.8)" fill="#8cc05c"/><ellipse cx="6.4" cy="6" rx="1.6" ry="1" transform="rotate(-40 6.4 6)" fill="#8cc05c"/></svg><div class="ab" style="left:403.60px;top:271.97px;width:137.40px;height:26.60px;border-radius:3px;background:linear-gradient(#fbfbfb,#eeeeee 50%,#d9d9d9);box-shadow:0 1px 1.5px rgba(0,0,0,.45);"></div><div class="ab" style="left:405.40px;top:273.27px;width:23.40px;height:24.00px;background:#fff;border:.8px solid #b0b0b0"></div><svg style="left:405.40px;top:273.27px;" width="23.40" height="24.00" viewBox="0 0 23.40 24.00"><path d="M15.68 22.32 L12.87 15.12 C14.51 14.40 15.91 13.44 15.44 12.00 L16.85 11.04 L16.15 9.84 L17.32 8.64 C16.85 3.60 14.04 1.20 10.53 1.92 C7.02 2.40 6.08 6.00 7.02 9.60 C7.49 12.00 8.42 13.20 7.96 14.40 L5.15 15.84 C9.36 16.80 12.17 18.24 15.68 22.32Z" fill="#666"/></svg><div class="t" style="left:431.10px;top:277px;font-size:9.2px;font-weight:400;color:#1a1a1a;transform:scaleX(0.763);">James Hoyt</div><div class="t" style="left:431.40px;top:288px;font-size:9.2px;font-weight:400;color:#1a1a1a;transform:scaleX(0.754);">1807 – 1902</div><svg style="left:529.80px;top:288.27px;" width="9.60" height="8.80" viewBox="0 0 9.60 8.80"><path d="M0.8 8.4C-0.3 4.5 2 0.6 6 0.6 7.5 0.6 8.8 0.6 9.4 0.6 9.4 1.5 9.4 2.8 9.2 4 8.8 7.2 5.2 9.4 0.8 8.4z" fill="#5e9c30" stroke="#3a721a" stroke-width=".6"/><path d="M1.4 7.8C3.4 5.6 5.6 3.4 8.2 1.5" stroke="#a8d478" stroke-width=".8" fill="none"/><ellipse cx="4.6" cy="3.8" rx="1.8" ry="1.1" transform="rotate(-40 4.6 3.8)" fill="#8cc05c"/><ellipse cx="6.4" cy="6" rx="1.6" ry="1" transform="rotate(-40 6.4 6)" fill="#8cc05c"/></svg><div class="ab" style="left:403.60px;top:352.68px;width:137.40px;height:26.60px;border-radius:3px;background:linear-gradient(#fbfbfb,#eeeeee 50%,#d9d9d9);box-shadow:0 1px 1.5px rgba(0,0,0,.45);"></div><div class="ab" style="left:405.40px;top:353.98px;width:23.40px;height:24.00px;background:#fff;border:.8px solid #b0b0b0"></div><svg style="left:405.40px;top:353.98px;" width="23.40" height="24.00" viewBox="0 0 23.40 24.00"><path d="M15.68 22.32 L12.87 15.12 C14.51 14.40 15.91 13.44 15.44 12.00 L16.85 11.04 L16.15 9.84 L17.32 8.64 C16.85 3.60 14.04 1.20 10.53 1.92 C7.02 2.40 6.08 6.00 7.02 9.60 C7.49 12.00 8.42 13.20 7.96 14.40 L5.15 15.84 C9.36 16.80 12.17 18.24 15.68 22.32Z" fill="#666"/></svg><div class="t" style="left:431.10px;top:358px;font-size:9.2px;font-weight:400;color:#1a1a1a;transform:scaleX(0.819);">Maria Hitchcock</div><div class="t" style="left:431.40px;top:369px;font-size:9.2px;font-weight:400;color:#1a1a1a;transform:scaleX(0.754);">1815 – 1850</div><svg style="left:529.80px;top:368.98px;" width="9.60" height="8.80" viewBox="0 0 9.60 8.80"><path d="M0.8 8.4C-0.3 4.5 2 0.6 6 0.6 7.5 0.6 8.8 0.6 9.4 0.6 9.4 1.5 9.4 2.8 9.2 4 8.8 7.2 5.2 9.4 0.8 8.4z" fill="#5e9c30" stroke="#3a721a" stroke-width=".6"/><path d="M1.4 7.8C3.4 5.6 5.6 3.4 8.2 1.5" stroke="#a8d478" stroke-width=".8" fill="none"/><ellipse cx="4.6" cy="3.8" rx="1.8" ry="1.1" transform="rotate(-40 4.6 3.8)" fill="#8cc05c"/><ellipse cx="6.4" cy="6" rx="1.6" ry="1" transform="rotate(-40 6.4 6)" fill="#8cc05c"/></svg><div class="ab" style="left:550.50px;top:95.70px;width:114.80px;height:16.00px;border-radius:3px;background:linear-gradient(#fbfbfb,#eeeeee 50%,#d9d9d9);box-shadow:0 1px 1.5px rgba(0,0,0,.45);"></div><div class="t" style="left:553.80px;top:100px;font-size:9.2px;font-weight:400;color:#1a1a1a;transform:scaleX(0.799);">Add Father</div><div class="ab" style="left:550.50px;top:136.05px;width:114.80px;height:16.00px;border-radius:3px;background:linear-gradient(#fbfbfb,#eeeeee 50%,#d9d9d9);box-shadow:0 1px 1.5px rgba(0,0,0,.45);"></div><div class="t" style="left:553.80px;top:140px;font-size:9.2px;font-weight:400;color:#1a1a1a;transform:scaleX(0.829);">Add Mother</div><div class="ab" style="left:550.50px;top:176.40px;width:114.80px;height:16.00px;border-radius:3px;background:linear-gradient(#fbfbfb,#eeeeee 50%,#d9d9d9);box-shadow:0 1px 1.5px rgba(0,0,0,.45);"></div><div class="t" style="left:553.80px;top:181px;font-size:9.2px;font-weight:400;color:#1a1a1a;transform:scaleX(0.804);">David Haggard</div><svg style="left:654.00px;top:181.60px;" width="9.60" height="8.80" viewBox="0 0 9.60 8.80"><path d="M0.8 8.4C-0.3 4.5 2 0.6 6 0.6 7.5 0.6 8.8 0.6 9.4 0.6 9.4 1.5 9.4 2.8 9.2 4 8.8 7.2 5.2 9.4 0.8 8.4z" fill="#5e9c30" stroke="#3a721a" stroke-width=".6"/><path d="M1.4 7.8C3.4 5.6 5.6 3.4 8.2 1.5" stroke="#a8d478" stroke-width=".8" fill="none"/><ellipse cx="4.6" cy="3.8" rx="1.8" ry="1.1" transform="rotate(-40 4.6 3.8)" fill="#8cc05c"/><ellipse cx="6.4" cy="6" rx="1.6" ry="1" transform="rotate(-40 6.4 6)" fill="#8cc05c"/></svg><svg style="left:667.40px;top:179.70px;" width="9.50" height="9.40" viewBox="0 0 9.50 9.40"><path d="M0 0l9 4.7L0 9.4z" fill="#d8dce2"/></svg><div class="ab" style="left:550.50px;top:216.75px;width:114.80px;height:16.00px;border-radius:3px;background:linear-gradient(#fbfbfb,#eeeeee 50%,#d9d9d9);box-shadow:0 1px 1.5px rgba(0,0,0,.45);"></div><div class="t" style="left:553.80px;top:221px;font-size:9.2px;font-weight:400;color:#1a1a1a;transform:scaleX(0.785);">Nancy Dawson</div><svg style="left:667.40px;top:220.05px;" width="9.50" height="9.40" viewBox="0 0 9.50 9.40"><path d="M0 0l9 4.7L0 9.4z" fill="#d8dce2"/></svg><div class="ab" style="left:550.50px;top:257.10px;width:114.80px;height:16.00px;border-radius:3px;background:linear-gradient(#fbfbfb,#eeeeee 50%,#d9d9d9);box-shadow:0 1px 1.5px rgba(0,0,0,.45);"></div><div class="t" style="left:553.80px;top:261px;font-size:9.2px;font-weight:400;color:#1a1a1a;transform:scaleX(0.803);">Benjamin Hoyt</div><svg style="left:654.00px;top:262.30px;" width="9.60" height="8.80" viewBox="0 0 9.60 8.80"><path d="M0.8 8.4C-0.3 4.5 2 0.6 6 0.6 7.5 0.6 8.8 0.6 9.4 0.6 9.4 1.5 9.4 2.8 9.2 4 8.8 7.2 5.2 9.4 0.8 8.4z" fill="#5e9c30" stroke="#3a721a" stroke-width=".6"/><path d="M1.4 7.8C3.4 5.6 5.6 3.4 8.2 1.5" stroke="#a8d478" stroke-width=".8" fill="none"/><ellipse cx="4.6" cy="3.8" rx="1.8" ry="1.1" transform="rotate(-40 4.6 3.8)" fill="#8cc05c"/><ellipse cx="6.4" cy="6" rx="1.6" ry="1" transform="rotate(-40 6.4 6)" fill="#8cc05c"/></svg><svg style="left:667.40px;top:260.40px;" width="9.50" height="9.40" viewBox="0 0 9.50 9.40"><path d="M0 0l9 4.7L0 9.4z" fill="#d8dce2"/></svg><div class="ab" style="left:550.50px;top:297.45px;width:114.80px;height:16.00px;border-radius:3px;background:linear-gradient(#fbfbfb,#eeeeee 50%,#d9d9d9);box-shadow:0 1px 1.5px rgba(0,0,0,.45);"></div><div class="t" style="left:553.80px;top:302px;font-size:9.2px;font-weight:400;color:#1a1a1a;transform:scaleX(0.778);">Elizabeth Reed</div><svg style="left:654.00px;top:302.65px;" width="9.60" height="8.80" viewBox="0 0 9.60 8.80"><path d="M0.8 8.4C-0.3 4.5 2 0.6 6 0.6 7.5 0.6 8.8 0.6 9.4 0.6 9.4 1.5 9.4 2.8 9.2 4 8.8 7.2 5.2 9.4 0.8 8.4z" fill="#5e9c30" stroke="#3a721a" stroke-width=".6"/><path d="M1.4 7.8C3.4 5.6 5.6 3.4 8.2 1.5" stroke="#a8d478" stroke-width=".8" fill="none"/><ellipse cx="4.6" cy="3.8" rx="1.8" ry="1.1" transform="rotate(-40 4.6 3.8)" fill="#8cc05c"/><ellipse cx="6.4" cy="6" rx="1.6" ry="1" transform="rotate(-40 6.4 6)" fill="#8cc05c"/></svg><svg style="left:667.40px;top:300.75px;" width="9.50" height="9.40" viewBox="0 0 9.50 9.40"><path d="M0 0l9 4.7L0 9.4z" fill="#d8dce2"/></svg><div class="ab" style="left:550.50px;top:337.80px;width:114.80px;height:16.00px;border-radius:3px;background:linear-gradient(#fbfbfb,#eeeeee 50%,#d9d9d9);box-shadow:0 1px 1.5px rgba(0,0,0,.45);"></div><div class="t" style="left:553.80px;top:342px;font-size:9.2px;font-weight:400;color:#1a1a1a;transform:scaleX(0.815);">David Hitchcock</div><svg style="left:667.40px;top:341.10px;" width="9.50" height="9.40" viewBox="0 0 9.50 9.40"><path d="M0.6 0.8l8 3.9-8 3.9z" fill="none" stroke="#c8ccd4" stroke-width=".9"/></svg><div class="ab" style="left:550.50px;top:378.15px;width:114.80px;height:16.00px;border-radius:3px;background:linear-gradient(#fbfbfb,#eeeeee 50%,#d9d9d9);box-shadow:0 1px 1.5px rgba(0,0,0,.45);"></div><div class="t" style="left:553.80px;top:383px;font-size:9.2px;font-weight:400;color:#1a1a1a;transform:scaleX(0.829);">Add Mother</div><div class="ab" style="left:220.70px;top:395.60px;width:41.00px;height:2.60px;background:linear-gradient(#a8acb4,#c8ccd2);border-radius:1.3px"></div><svg style="left:260.30px;top:393.30px;" width="7.60" height="8.80" viewBox="0 0 7.60 8.80"><defs><linearGradient id="th" x1="0" y1="0" x2="0" y2="1"><stop offset="0" stop-color="#dceaf8"/><stop offset=".5" stop-color="#8ab4e8"/><stop offset="1" stop-color="#5a8ad0"/></linearGradient></defs><path d="M0.4 0.4h6.8v5L3.8 8.4 0.4 5.4z" fill="url(#th)" stroke="#4a6a9a" stroke-width=".6"/></svg><div class="t" style="left:273.40px;top:394px;font-size:9px;font-weight:400;color:#141820;transform:scaleX(1.010);">4 generations</div><div class="ab" style="left:215.80px;top:409.20px;width:1.10px;height:1.00px;background:#8c8c8c"></div><div class="ab" style="left:218.30px;top:409.20px;width:1.10px;height:1.00px;background:#8c8c8c"></div><div class="ab" style="left:220.80px;top:409.20px;width:1.10px;height:1.00px;background:#8c8c8c"></div><div class="ab" style="left:223.30px;top:409.20px;width:1.10px;height:1.00px;background:#8c8c8c"></div><div class="ab" style="left:230.80px;top:409.20px;width:1.10px;height:1.00px;background:#8c8c8c"></div><div class="ab" style="left:233.30px;top:409.20px;width:1.10px;height:1.00px;background:#8c8c8c"></div><div class="ab" style="left:235.80px;top:409.20px;width:1.10px;height:1.00px;background:#8c8c8c"></div><div class="ab" style="left:238.30px;top:409.20px;width:1.10px;height:1.00px;background:#8c8c8c"></div><div class="ab" style="left:240.80px;top:409.20px;width:1.10px;height:1.00px;background:#8c8c8c"></div><div class="ab" style="left:243.30px;top:409.20px;width:1.10px;height:1.00px;background:#8c8c8c"></div><svg style="left:227.00px;top:407.60px;" width="5.40" height="4.00" viewBox="0 0 5.40 4.00"><path d="M0 0h5.4L2.7 3.6z" fill="#1a2230"/></svg><div class="ab" style="left:210.40px;top:85.00px;width:1.10px;height:1.00px;background:#9a9a9a"></div><div class="ab" style="left:210.40px;top:87.45px;width:1.10px;height:1.00px;background:#9a9a9a"></div><div class="ab" style="left:210.40px;top:89.90px;width:1.10px;height:1.00px;background:#9a9a9a"></div><div class="ab" style="left:210.40px;top:92.35px;width:1.10px;height:1.00px;background:#9a9a9a"></div><div class="ab" style="left:210.40px;top:94.80px;width:1.10px;height:1.00px;background:#9a9a9a"></div><div class="ab" style="left:210.40px;top:104.60px;width:1.10px;height:1.00px;background:#9a9a9a"></div><div class="ab" style="left:210.40px;top:107.05px;width:1.10px;height:1.00px;background:#9a9a9a"></div><div class="ab" style="left:210.40px;top:109.50px;width:1.10px;height:1.00px;background:#9a9a9a"></div><div class="ab" style="left:210.40px;top:111.95px;width:1.10px;height:1.00px;background:#9a9a9a"></div><svg style="left:209.30px;top:96.40px;" width="4.20" height="6.00" viewBox="0 0 4.20 6.00"><path d="M4.2 0v6L0 3z" fill="#1a2230"/></svg><div class="ab" style="left:214.80px;top:412.80px;width:467.00px;height:293.50px;background:#efefef;border:1px solid #a8a8a8;box-shadow:inset 0 0 0 1px #fafafa"></div><div class="ab" style="left:218.30px;top:416.70px;width:227.00px;height:14.30px;border-radius:3px;background:linear-gradient(#fdfdfd,#ececec 50%,#dcdcdc);border:1px solid #979797;box-shadow:0 .5px .5px rgba(0,0,0,.15)"></div><div class="t" style="left:299.65px;top:419px;font-size:9.6px;font-weight:400;color:#1e1e1e;transform:scaleX(0.972);">John W. &amp; Julia</div><svg style="left:222.80px;top:419.20px;" width="10.00" height="9.00" viewBox="0 0 10.00 9.00"><path d="M1 1v6.5h7.5" stroke="#5aa0dc" stroke-width="1.2" fill="none"/><path d="M2.5 1.5L7.5 6.3" stroke="#5aa0dc" stroke-width="1.5" fill="none"/><path d="M8.6 3.2v4.4H4.2z" fill="#5aa0dc"/></svg><div class="ab" style="left:450.00px;top:416.70px;width:227.60px;height:14.30px;border-radius:3px;background:linear-gradient(#fdfdfd,#ececec 50%,#dcdcdc);border:1px solid #979797;box-shadow:0 .5px .5px rgba(0,0,0,.15)"></div><div class="t" style="left:520.80px;top:419px;font-size:9.6px;font-weight:400;color:#1e1e1e;transform:scaleX(1.015);">William B. &amp; Charity</div><svg style="left:454.50px;top:419.20px;" width="10.00" height="9.00" viewBox="0 0 10.00 9.00"><path d="M1 1v6.5h7.5" stroke="#5aa0dc" stroke-width="1.2" fill="none"/><path d="M2.5 1.5L7.5 6.3" stroke="#5aa0dc" stroke-width="1.5" fill="none"/><path d="M8.6 3.2v4.4H4.2z" fill="#5aa0dc"/></svg><div class="ab" style="left:217.90px;top:433.30px;width:227.70px;height:59.30px;background:#d3dce6;border:2px solid #8cb5df"></div><div class="ab" style="left:450.00px;top:433.30px;width:227.60px;height:59.00px;background:#d3dce6"></div><div class="t" style="left:225.20px;top:439px;font-size:8.6px;font-weight:700;color:#1e1e1e;transform:scaleX(0.940);">James Clarence Bobbitt</div><div class="t" style="left:225.20px;top:449px;font-size:8.6px;font-weight:700;color:#1e1e1e;transform:scaleX(0.905);">Born:</div><div class="t" style="left:253.20px;top:449px;font-size:8.6px;font-weight:400;color:#1e1e1e;transform:scaleX(0.974);">28 Jul 1858</div><div class="t" style="left:253.20px;top:459px;font-size:8.6px;font-weight:400;color:#1e1e1e;transform:scaleX(0.939);">Illinois, USA</div><div class="t" style="left:225.20px;top:470px;font-size:8.6px;font-weight:700;color:#1e1e1e;transform:scaleX(0.908);">Died:</div><div class="t" style="left:253.20px;top:470px;font-size:8.6px;font-weight:400;color:#1e1e1e;transform:scaleX(0.941);">02 Jun 1929</div><div class="t" style="left:253.20px;top:480px;font-size:8.6px;font-weight:400;color:#1e1e1e;transform:scaleX(0.929);">Balko, Beaver, Oklahoma, USA</div><div class="t" style="left:457.60px;top:439px;font-size:8.6px;font-weight:700;color:#1e1e1e;transform:scaleX(0.944);">Margaret Rebecca Shanklin</div><div class="t" style="left:457.60px;top:449px;font-size:8.6px;font-weight:700;color:#1e1e1e;transform:scaleX(0.905);">Born:</div><div class="t" style="left:485.60px;top:449px;font-size:8.6px;font-weight:400;color:#1e1e1e;transform:scaleX(0.945);">12 Jul 1863</div><div class="t" style="left:485.60px;top:459px;font-size:8.6px;font-weight:400;color:#1e1e1e;transform:scaleX(0.939);">Illinois, USA</div><div class="t" style="left:457.60px;top:469px;font-size:8.6px;font-weight:700;color:#1e1e1e;transform:scaleX(0.908);">Died:</div><div class="t" style="left:485.60px;top:469px;font-size:8.6px;font-weight:400;color:#1e1e1e;transform:scaleX(0.974);">29 Mar 1944</div><div class="t" style="left:485.60px;top:479px;font-size:8.6px;font-weight:400;color:#1e1e1e;transform:scaleX(0.957);">Oklahoma</div><div class="ab" style="left:405.90px;top:436.50px;width:25.80px;height:14.90px;border-radius:3px;background:linear-gradient(#fafafa,#dedede);border:1px solid #9a9a9a"></div><svg style="left:409.90px;top:438.50px;" width="9.00" height="11.00" viewBox="0 0 9.00 11.00"><ellipse cx="4.5" cy="5" rx="3.6" ry="4.5" fill="#6a3a1a"/><ellipse cx="4.5" cy="5.5" rx="2.2" ry="3" fill="#f0c8a8"/><path d="M2 11c0-2 1-3 2.5-3s2.5 1 2.5 3z" fill="#d87a8a"/></svg><svg style="left:421.90px;top:442.50px;" width="6.00" height="4.00" viewBox="0 0 6.00 4.00"><path d="M0 0h5.5L2.75 3.5z" fill="#1a1a1a"/></svg><div class="t" style="left:436.50px;top:440px;font-size:8.6px;font-weight:400;color:#1e1e1e;">1</div><div class="ab" style="left:638.30px;top:437.00px;width:25.80px;height:14.90px;border-radius:3px;background:linear-gradient(#fafafa,#dedede);border:1px solid #9a9a9a"></div><svg style="left:642.30px;top:439.00px;" width="9.00" height="11.00" viewBox="0 0 9.00 11.00"><ellipse cx="4.5" cy="4.5" rx="2.4" ry="3" fill="#e8b898"/><path d="M2.3 3c0-2.5 4.4-2.5 4.4 0z" fill="#7a4a2a"/><path d="M2 11V7.5c0-1 1-1.5 2.5-1.5s2.5.5 2.5 1.5V11z" fill="#9a6a5a"/></svg><svg style="left:654.30px;top:443.00px;" width="6.00" height="4.00" viewBox="0 0 6.00 4.00"><path d="M0 0h5.5L2.75 3.5z" fill="#1a1a1a"/></svg><div class="t" style="left:668.40px;top:440px;font-size:8.6px;font-weight:400;color:#1e1e1e;">1</div><div class="ab" style="left:218.50px;top:494.50px;width:459.00px;height:17.00px;background:linear-gradient(#d2d2d2,#c4c4c4)"></div><div class="ab" style="left:610.50px;top:494.50px;width:4.00px;height:17.00px;background:#dcdcdc"></div><div class="t" style="left:225.00px;top:499px;font-size:8.6px;font-weight:700;color:#1e1e1e;transform:scaleX(0.969);">Marriage:</div><div class="t" style="left:264.50px;top:499px;font-size:8.6px;font-weight:400;color:#1e1e1e;transform:scaleX(0.971);">20 Feb 1882 in Marshall County, Illinois, USA</div><div class="ab" style="left:594.00px;top:497.80px;width:13.00px;height:11.50px;border-radius:2.5px;background:linear-gradient(#fafafa,#d8d8d8);border:1px solid #8e8e8e"></div><svg style="left:594.00px;top:497.80px;" width="13.00" height="11.50" viewBox="0 0 13.00 11.50"><circle cx="4.5" cy="3.3" r="1.6" fill="#c89a6a"/><path d="M2.5 9.5V6c0-1 1-1.6 2-1.6s2 .6 2 1.6v3.5z" fill="#2a4a2a"/><circle cx="8.7" cy="3.3" r="1.6" fill="#c89a6a"/><path d="M6.7 9.5V6c0-1 1-1.6 2-1.6s2 .6 2 1.6v3.5z" fill="#2a3a5a"/></svg><div class="ab" style="left:615.40px;top:497.80px;width:25.90px;height:11.50px;border-radius:2.5px;background:linear-gradient(#fafafa,#d8d8d8);border:1px solid #8e8e8e"></div><svg style="left:615.40px;top:497.80px;" width="25.90" height="11.50" viewBox="0 0 25.90 11.50"><path d="M4 8.5l4.5-6 4.5 6z" fill="#8a9ab8"/><path d="M13 2.5v7.5" stroke="#a0a0a0" stroke-width=".7"/><path d="M17 2.8h8.5l-4.25 6z" fill="#8a9ab8"/></svg><div class="ab" style="left:645.20px;top:497.80px;width:12.40px;height:11.50px;border-radius:2.5px;background:linear-gradient(#fafafa,#d8d8d8);border:1px solid #8e8e8e"></div><svg style="left:645.20px;top:497.80px;" width="12.40" height="11.50" viewBox="0 0 12.40 11.50"><circle cx="6.2" cy="5.7" r="2.8" stroke="#9aa0aa" stroke-width="1" fill="none"/></svg><div class="ab" style="left:662.00px;top:497.80px;width:12.70px;height:11.50px;border-radius:2.5px;background:linear-gradient(#3a4a3a,#2a3a2a);border:1px solid #8e8e8e"></div><svg style="left:662.00px;top:497.80px;" width="12.70" height="11.50" viewBox="0 0 12.70 11.50"><rect x="2" y="2" width="8.7" height="7.5" fill="#6ac04a"/><path d="M3 4h6.7M3 7h6.7" stroke="#2a6a1a" stroke-width=".8"/></svg><div class="ab" style="left:218.50px;top:514.50px;width:459.10px;height:188.50px;background:#fff;border:1px solid #b0b0b0"></div><div class="ab" style="left:219.50px;top:515.00px;width:457.10px;height:10.50px;background:linear-gradient(#fbfbfb,#e8e8e8);border-bottom:1px solid #c8c8c8"></div><div class="ab" style="left:238.00px;top:515.50px;width:0.70px;height:10.00px;background:#c4c4c4"></div><div class="ab" style="left:257.00px;top:515.50px;width:0.70px;height:10.00px;background:#c4c4c4"></div><div class="ab" style="left:367.40px;top:515.50px;width:0.70px;height:10.00px;background:#c4c4c4"></div><div class="ab" style="left:389.30px;top:515.50px;width:0.70px;height:10.00px;background:#c4c4c4"></div><div class="ab" style="left:517.30px;top:515.50px;width:0.70px;height:10.00px;background:#c4c4c4"></div><div class="ab" style="left:666.40px;top:515.50px;width:0.70px;height:10.00px;background:#c4c4c4"></div><div class="t" style="left:222.00px;top:516px;font-size:8.5px;font-weight:400;color:#2a2a2a;transform:scaleX(0.926);">Go</div><div class="t" style="left:260.10px;top:516px;font-size:8.5px;font-weight:400;color:#2a2a2a;transform:scaleX(1.006);">Children: 12</div><div class="t" style="left:370.50px;top:516px;font-size:8.5px;font-weight:400;color:#2a2a2a;transform:scaleX(0.887);">Sex</div><div class="t" style="left:392.20px;top:516px;font-size:8.5px;font-weight:400;color:#2a2a2a;transform:scaleX(1.087);">Birth</div><div class="t" style="left:520.20px;top:516px;font-size:8.5px;font-weight:400;color:#2a2a2a;transform:scaleX(0.992);">Death</div><div class="ab" style="left:219.50px;top:537.10px;width:446.90px;height:11.10px;background:#edf3fc"></div><div class="ab" style="left:219.50px;top:559.30px;width:446.90px;height:11.10px;background:#edf3fc"></div><div class="ab" style="left:219.50px;top:581.50px;width:446.90px;height:11.10px;background:#edf3fc"></div><div class="ab" style="left:219.50px;top:603.70px;width:446.90px;height:11.10px;background:#edf3fc"></div><div class="ab" style="left:219.50px;top:625.90px;width:446.90px;height:11.10px;background:#edf3fc"></div><div class="ab" style="left:219.50px;top:648.10px;width:446.90px;height:11.10px;background:#edf3fc"></div><div class="ab" style="left:219.50px;top:670.30px;width:446.90px;height:11.10px;background:#edf3fc"></div><div class="ab" style="left:219.50px;top:692.50px;width:446.90px;height:11.10px;background:#edf3fc"></div><svg style="left:224.30px;top:528.25px;" width="7.00" height="7.00" viewBox="0 0 7.00 7.00"><path d="M6.8 0v7L0 3.5z" fill="#285894"/></svg><svg style="left:242.60px;top:526.95px;" width="10.00" height="9.20" viewBox="0 0 10.00 9.20"><path d="M5 1.2c0-1 4.5-1 4.5 0V9H5z" fill="#c8a060"/><ellipse cx="7.3" cy="3.2" rx="1.5" ry="1.9" fill="#f0d8b0"/><path d="M5.5 9V6.5c0-.8.8-1.2 1.8-1.2s1.8.4 1.8 1.2V9z" fill="#e0c080"/><circle cx="3.3" cy="2.9" r="2" fill="#d8a880"/><path d="M1.3 2.4c.2-1.8 3.8-1.8 4 0-.8-.6-3.2-.6-4 0z" fill="#4a3020"/><path d="M0 9.2V6.8c0-1.2 1.4-1.8 3.3-1.8s3.3.6 3.3 1.8v2.4z" fill="#26385a"/><path d="M2.8 5.1l.5 2 .5-2z" fill="#fff"/></svg><div class="t" style="left:260.20px;top:528px;font-size:8.4px;font-weight:400;color:#1e1e1e;">Charity Bobbitt</div><div class="t" style="left:369.80px;top:528px;font-size:8.4px;font-weight:400;color:#1e1e1e;">F</div><div class="t" style="left:392.30px;top:528px;font-size:8.4px;font-weight:400;color:#1e1e1e;transform:scaleX(0.978);">10 Mar 1883 in Nebraska, USA</div><div class="t" style="left:519.90px;top:528px;font-size:8.4px;font-weight:400;color:#1e1e1e;">May 1982</div><svg style="left:224.30px;top:539.35px;" width="7.00" height="7.00" viewBox="0 0 7.00 7.00"><path d="M6.3 0.7v5.6L1 3.5z" fill="none" stroke="#6a84a8" stroke-width="1"/></svg><svg style="left:242.60px;top:538.05px;" width="10.00" height="9.20" viewBox="0 0 10.00 9.20"><path d="M5 1.2c0-1 4.5-1 4.5 0V9H5z" fill="#c8a060"/><ellipse cx="7.3" cy="3.2" rx="1.5" ry="1.9" fill="#f0d8b0"/><path d="M5.5 9V6.5c0-.8.8-1.2 1.8-1.2s1.8.4 1.8 1.2V9z" fill="#e0c080"/><circle cx="3.3" cy="2.9" r="2" fill="#d8a880"/><path d="M1.3 2.4c.2-1.8 3.8-1.8 4 0-.8-.6-3.2-.6-4 0z" fill="#4a3020"/><path d="M0 9.2V6.8c0-1.2 1.4-1.8 3.3-1.8s3.3.6 3.3 1.8v2.4z" fill="#26385a"/><path d="M2.8 5.1l.5 2 .5-2z" fill="#fff"/></svg><div class="t" style="left:260.20px;top:539px;font-size:8.4px;font-weight:400;color:#1e1e1e;">James Leslie Bobbitt</div><div class="t" style="left:369.80px;top:539px;font-size:8.4px;font-weight:400;color:#1e1e1e;">M</div><div class="t" style="left:392.30px;top:539px;font-size:8.4px;font-weight:400;color:#1e1e1e;transform:scaleX(0.967);">19 Sep 1884 in Nebraska, USA</div><div class="t" style="left:519.90px;top:539px;font-size:8.4px;font-weight:400;color:#1e1e1e;">22 Mar 1971</div><svg style="left:224.30px;top:550.45px;" width="7.00" height="7.00" viewBox="0 0 7.00 7.00"><path d="M6.3 0.7v5.6L1 3.5z" fill="none" stroke="#6a84a8" stroke-width="1"/></svg><svg style="left:242.60px;top:549.15px;" width="10.00" height="9.20" viewBox="0 0 10.00 9.20"><path d="M5 1.2c0-1 4.5-1 4.5 0V9H5z" fill="#c8a060"/><ellipse cx="7.3" cy="3.2" rx="1.5" ry="1.9" fill="#f0d8b0"/><path d="M5.5 9V6.5c0-.8.8-1.2 1.8-1.2s1.8.4 1.8 1.2V9z" fill="#e0c080"/><circle cx="3.3" cy="2.9" r="2" fill="#d8a880"/><path d="M1.3 2.4c.2-1.8 3.8-1.8 4 0-.8-.6-3.2-.6-4 0z" fill="#4a3020"/><path d="M0 9.2V6.8c0-1.2 1.4-1.8 3.3-1.8s3.3.6 3.3 1.8v2.4z" fill="#26385a"/><path d="M2.8 5.1l.5 2 .5-2z" fill="#fff"/></svg><div class="t" style="left:260.20px;top:550px;font-size:8.4px;font-weight:400;color:#1e1e1e;">Mary E. Bobbitt</div><div class="t" style="left:369.80px;top:550px;font-size:8.4px;font-weight:400;color:#1e1e1e;">F</div><div class="t" style="left:392.30px;top:550px;font-size:8.4px;font-weight:400;color:#1e1e1e;transform:scaleX(0.975);">Apr 1886 in Nebraska, USA</div><div class="t" style="left:519.90px;top:550px;font-size:8.4px;font-weight:400;color:#1e1e1e;">1966</div><svg style="left:224.30px;top:561.55px;" width="7.00" height="7.00" viewBox="0 0 7.00 7.00"><path d="M6.8 0v7L0 3.5z" fill="#285894"/></svg><svg style="left:242.60px;top:560.25px;" width="10.00" height="9.20" viewBox="0 0 10.00 9.20"><path d="M5 1.2c0-1 4.5-1 4.5 0V9H5z" fill="#c8a060"/><ellipse cx="7.3" cy="3.2" rx="1.5" ry="1.9" fill="#f0d8b0"/><path d="M5.5 9V6.5c0-.8.8-1.2 1.8-1.2s1.8.4 1.8 1.2V9z" fill="#e0c080"/><circle cx="3.3" cy="2.9" r="2" fill="#d8a880"/><path d="M1.3 2.4c.2-1.8 3.8-1.8 4 0-.8-.6-3.2-.6-4 0z" fill="#4a3020"/><path d="M0 9.2V6.8c0-1.2 1.4-1.8 3.3-1.8s3.3.6 3.3 1.8v2.4z" fill="#26385a"/><path d="M2.8 5.1l.5 2 .5-2z" fill="#fff"/></svg><div class="t" style="left:260.20px;top:561px;font-size:8.4px;font-weight:400;color:#1e1e1e;">Bessie Anita Bobbitt</div><div class="t" style="left:369.80px;top:561px;font-size:8.4px;font-weight:400;color:#1e1e1e;">F</div><div class="t" style="left:392.30px;top:561px;font-size:8.4px;font-weight:400;color:#1e1e1e;transform:scaleX(0.974);">14 Dec 1888 in Nebraska, USA</div><div class="t" style="left:519.90px;top:561px;font-size:8.4px;font-weight:400;color:#1e1e1e;">18 Jan 1978</div><svg style="left:224.30px;top:572.65px;" width="7.00" height="7.00" viewBox="0 0 7.00 7.00"><path d="M6.8 0v7L0 3.5z" fill="#285894"/></svg><svg style="left:242.60px;top:571.35px;" width="10.00" height="9.20" viewBox="0 0 10.00 9.20"><path d="M5 1.2c0-1 4.5-1 4.5 0V9H5z" fill="#c8a060"/><ellipse cx="7.3" cy="3.2" rx="1.5" ry="1.9" fill="#f0d8b0"/><path d="M5.5 9V6.5c0-.8.8-1.2 1.8-1.2s1.8.4 1.8 1.2V9z" fill="#e0c080"/><circle cx="3.3" cy="2.9" r="2" fill="#d8a880"/><path d="M1.3 2.4c.2-1.8 3.8-1.8 4 0-.8-.6-3.2-.6-4 0z" fill="#4a3020"/><path d="M0 9.2V6.8c0-1.2 1.4-1.8 3.3-1.8s3.3.6 3.3 1.8v2.4z" fill="#26385a"/><path d="M2.8 5.1l.5 2 .5-2z" fill="#fff"/></svg><div class="t" style="left:260.20px;top:572px;font-size:8.4px;font-weight:400;color:#1e1e1e;">Alta Maud Bobbitt</div><div class="t" style="left:369.80px;top:572px;font-size:8.4px;font-weight:400;color:#1e1e1e;">F</div><div class="t" style="left:392.30px;top:572px;font-size:8.4px;font-weight:400;color:#1e1e1e;transform:scaleX(0.961);">09 Feb 1892 in Kansas, USA</div><div class="t" style="left:519.90px;top:572px;font-size:8.4px;font-weight:400;color:#1e1e1e;transform:scaleX(1.010);">04 Nov 1987 in Cherokee, Alfalfa, O...</div><svg style="left:224.30px;top:583.75px;" width="7.00" height="7.00" viewBox="0 0 7.00 7.00"><path d="M6.3 0.7v5.6L1 3.5z" fill="none" stroke="#6a84a8" stroke-width="1"/></svg><svg style="left:242.60px;top:582.45px;" width="10.00" height="9.20" viewBox="0 0 10.00 9.20"><path d="M5 1.2c0-1 4.5-1 4.5 0V9H5z" fill="#c8a060"/><ellipse cx="7.3" cy="3.2" rx="1.5" ry="1.9" fill="#f0d8b0"/><path d="M5.5 9V6.5c0-.8.8-1.2 1.8-1.2s1.8.4 1.8 1.2V9z" fill="#e0c080"/><circle cx="3.3" cy="2.9" r="2" fill="#d8a880"/><path d="M1.3 2.4c.2-1.8 3.8-1.8 4 0-.8-.6-3.2-.6-4 0z" fill="#4a3020"/><path d="M0 9.2V6.8c0-1.2 1.4-1.8 3.3-1.8s3.3.6 3.3 1.8v2.4z" fill="#26385a"/><path d="M2.8 5.1l.5 2 .5-2z" fill="#fff"/></svg><div class="t" style="left:260.20px;top:583px;font-size:8.4px;font-weight:400;color:#1e1e1e;">Veda M. Bobbitt</div><div class="t" style="left:369.80px;top:583px;font-size:8.4px;font-weight:400;color:#1e1e1e;">F</div><div class="t" style="left:392.30px;top:583px;font-size:8.4px;font-weight:400;color:#1e1e1e;">17 Jun 1895</div><div class="t" style="left:519.90px;top:583px;font-size:8.4px;font-weight:400;color:#1e1e1e;">04 Feb 1896</div><svg style="left:224.30px;top:594.85px;" width="7.00" height="7.00" viewBox="0 0 7.00 7.00"><path d="M6.3 0.7v5.6L1 3.5z" fill="none" stroke="#6a84a8" stroke-width="1"/></svg><svg style="left:242.60px;top:593.55px;" width="10.00" height="9.20" viewBox="0 0 10.00 9.20"><path d="M5 1.2c0-1 4.5-1 4.5 0V9H5z" fill="#c8a060"/><ellipse cx="7.3" cy="3.2" rx="1.5" ry="1.9" fill="#f0d8b0"/><path d="M5.5 9V6.5c0-.8.8-1.2 1.8-1.2s1.8.4 1.8 1.2V9z" fill="#e0c080"/><circle cx="3.3" cy="2.9" r="2" fill="#d8a880"/><path d="M1.3 2.4c.2-1.8 3.8-1.8 4 0-.8-.6-3.2-.6-4 0z" fill="#4a3020"/><path d="M0 9.2V6.8c0-1.2 1.4-1.8 3.3-1.8s3.3.6 3.3 1.8v2.4z" fill="#26385a"/><path d="M2.8 5.1l.5 2 .5-2z" fill="#fff"/></svg><div class="t" style="left:260.20px;top:594px;font-size:8.4px;font-weight:400;color:#1e1e1e;">Arthur Leroy Bobbitt</div><div class="t" style="left:369.80px;top:594px;font-size:8.4px;font-weight:400;color:#1e1e1e;">M</div><div class="t" style="left:392.30px;top:594px;font-size:8.4px;font-weight:400;color:#1e1e1e;">24 Aug 1897</div><div class="t" style="left:519.90px;top:594px;font-size:8.4px;font-weight:400;color:#1e1e1e;">05 Jun 1993</div><svg style="left:224.30px;top:605.95px;" width="7.00" height="7.00" viewBox="0 0 7.00 7.00"><path d="M6.8 0v7L0 3.5z" fill="#285894"/></svg><svg style="left:242.60px;top:604.65px;" width="10.00" height="9.20" viewBox="0 0 10.00 9.20"><path d="M5 1.2c0-1 4.5-1 4.5 0V9H5z" fill="#c8a060"/><ellipse cx="7.3" cy="3.2" rx="1.5" ry="1.9" fill="#f0d8b0"/><path d="M5.5 9V6.5c0-.8.8-1.2 1.8-1.2s1.8.4 1.8 1.2V9z" fill="#e0c080"/><circle cx="3.3" cy="2.9" r="2" fill="#d8a880"/><path d="M1.3 2.4c.2-1.8 3.8-1.8 4 0-.8-.6-3.2-.6-4 0z" fill="#4a3020"/><path d="M0 9.2V6.8c0-1.2 1.4-1.8 3.3-1.8s3.3.6 3.3 1.8v2.4z" fill="#26385a"/><path d="M2.8 5.1l.5 2 .5-2z" fill="#fff"/></svg><div class="t" style="left:260.20px;top:606px;font-size:8.4px;font-weight:400;color:#1e1e1e;">Twila Bobbitt</div><div class="t" style="left:369.80px;top:606px;font-size:8.4px;font-weight:400;color:#1e1e1e;">F</div><div class="t" style="left:392.30px;top:606px;font-size:8.4px;font-weight:400;color:#1e1e1e;">18 Jul 1899</div><div class="t" style="left:519.90px;top:606px;font-size:8.4px;font-weight:400;color:#1e1e1e;transform:scaleX(0.975);">27 May 1991 in Boise, Ada, Idaho, USA</div><svg style="left:224.30px;top:617.05px;" width="7.00" height="7.00" viewBox="0 0 7.00 7.00"><path d="M6.3 0.7v5.6L1 3.5z" fill="none" stroke="#6a84a8" stroke-width="1"/></svg><svg style="left:242.60px;top:615.75px;" width="10.00" height="9.20" viewBox="0 0 10.00 9.20"><path d="M5 1.2c0-1 4.5-1 4.5 0V9H5z" fill="#c8a060"/><ellipse cx="7.3" cy="3.2" rx="1.5" ry="1.9" fill="#f0d8b0"/><path d="M5.5 9V6.5c0-.8.8-1.2 1.8-1.2s1.8.4 1.8 1.2V9z" fill="#e0c080"/><circle cx="3.3" cy="2.9" r="2" fill="#d8a880"/><path d="M1.3 2.4c.2-1.8 3.8-1.8 4 0-.8-.6-3.2-.6-4 0z" fill="#4a3020"/><path d="M0 9.2V6.8c0-1.2 1.4-1.8 3.3-1.8s3.3.6 3.3 1.8v2.4z" fill="#26385a"/><path d="M2.8 5.1l.5 2 .5-2z" fill="#fff"/></svg><div class="t" style="left:260.20px;top:617px;font-size:8.4px;font-weight:400;color:#1e1e1e;">Clyde S. Bobbitt</div><div class="t" style="left:369.80px;top:617px;font-size:8.4px;font-weight:400;color:#1e1e1e;">M</div><div class="t" style="left:392.30px;top:617px;font-size:8.4px;font-weight:400;color:#1e1e1e;">02 Sep 1901</div><div class="t" style="left:519.90px;top:617px;font-size:8.4px;font-weight:400;color:#1e1e1e;">11 May 1902</div><svg style="left:224.30px;top:628.15px;" width="7.00" height="7.00" viewBox="0 0 7.00 7.00"><path d="M6.8 0v7L0 3.5z" fill="#285894"/></svg><svg style="left:242.60px;top:626.85px;" width="10.00" height="9.20" viewBox="0 0 10.00 9.20"><path d="M5 1.2c0-1 4.5-1 4.5 0V9H5z" fill="#c8a060"/><ellipse cx="7.3" cy="3.2" rx="1.5" ry="1.9" fill="#f0d8b0"/><path d="M5.5 9V6.5c0-.8.8-1.2 1.8-1.2s1.8.4 1.8 1.2V9z" fill="#e0c080"/><circle cx="3.3" cy="2.9" r="2" fill="#d8a880"/><path d="M1.3 2.4c.2-1.8 3.8-1.8 4 0-.8-.6-3.2-.6-4 0z" fill="#4a3020"/><path d="M0 9.2V6.8c0-1.2 1.4-1.8 3.3-1.8s3.3.6 3.3 1.8v2.4z" fill="#26385a"/><path d="M2.8 5.1l.5 2 .5-2z" fill="#fff"/></svg><div class="t" style="left:260.20px;top:628px;font-size:8.4px;font-weight:400;color:#1e1e1e;">Maurine Bobbitt</div><div class="t" style="left:369.80px;top:628px;font-size:8.4px;font-weight:400;color:#1e1e1e;">F</div><div class="t" style="left:392.30px;top:628px;font-size:8.4px;font-weight:400;color:#1e1e1e;transform:scaleX(0.995);">04 Jun 1906 in Cleo Springs, ...</div><div class="t" style="left:519.90px;top:628px;font-size:8.4px;font-weight:400;color:#1e1e1e;transform:scaleX(0.987);">29 Mar 1992 in Pleasant Grove, Utah...</div><svg style="left:224.30px;top:639.25px;" width="7.00" height="7.00" viewBox="0 0 7.00 7.00"><path d="M6.3 0.7v5.6L1 3.5z" fill="none" stroke="#6a84a8" stroke-width="1"/></svg><svg style="left:242.60px;top:637.95px;" width="10.00" height="9.20" viewBox="0 0 10.00 9.20"><path d="M5 1.2c0-1 4.5-1 4.5 0V9H5z" fill="#c8a060"/><ellipse cx="7.3" cy="3.2" rx="1.5" ry="1.9" fill="#f0d8b0"/><path d="M5.5 9V6.5c0-.8.8-1.2 1.8-1.2s1.8.4 1.8 1.2V9z" fill="#e0c080"/><circle cx="3.3" cy="2.9" r="2" fill="#d8a880"/><path d="M1.3 2.4c.2-1.8 3.8-1.8 4 0-.8-.6-3.2-.6-4 0z" fill="#4a3020"/><path d="M0 9.2V6.8c0-1.2 1.4-1.8 3.3-1.8s3.3.6 3.3 1.8v2.4z" fill="#26385a"/><path d="M2.8 5.1l.5 2 .5-2z" fill="#fff"/></svg><div class="t" style="left:260.20px;top:639px;font-size:8.4px;font-weight:400;color:#1e1e1e;">Lorine Bobbitt</div><div class="t" style="left:369.80px;top:639px;font-size:8.4px;font-weight:400;color:#1e1e1e;">F</div><div class="t" style="left:392.30px;top:639px;font-size:8.4px;font-weight:400;color:#1e1e1e;transform:scaleX(0.995);">04 Jun 1906 in Cleo Springs, ...</div><div class="t" style="left:519.90px;top:639px;font-size:8.4px;font-weight:400;color:#1e1e1e;">12 Jul 1907</div><svg style="left:224.30px;top:650.35px;" width="7.00" height="7.00" viewBox="0 0 7.00 7.00"><path d="M6.8 0v7L0 3.5z" fill="#285894"/></svg><svg style="left:242.60px;top:649.05px;" width="10.00" height="9.20" viewBox="0 0 10.00 9.20"><path d="M5 1.2c0-1 4.5-1 4.5 0V9H5z" fill="#c8a060"/><ellipse cx="7.3" cy="3.2" rx="1.5" ry="1.9" fill="#f0d8b0"/><path d="M5.5 9V6.5c0-.8.8-1.2 1.8-1.2s1.8.4 1.8 1.2V9z" fill="#e0c080"/><circle cx="3.3" cy="2.9" r="2" fill="#d8a880"/><path d="M1.3 2.4c.2-1.8 3.8-1.8 4 0-.8-.6-3.2-.6-4 0z" fill="#4a3020"/><path d="M0 9.2V6.8c0-1.2 1.4-1.8 3.3-1.8s3.3.6 3.3 1.8v2.4z" fill="#26385a"/><path d="M2.8 5.1l.5 2 .5-2z" fill="#fff"/></svg><div class="t" style="left:260.20px;top:650px;font-size:8.4px;font-weight:400;color:#1e1e1e;">Fern Edna Bobbitt</div><div class="t" style="left:369.80px;top:650px;font-size:8.4px;font-weight:400;color:#1e1e1e;">F</div><div class="t" style="left:392.30px;top:650px;font-size:8.4px;font-weight:400;color:#1e1e1e;">25 Feb 1909</div><div class="t" style="left:519.90px;top:650px;font-size:8.4px;font-weight:400;color:#1e1e1e;">17 Aug 1997</div><div class="t" style="left:260.20px;top:661px;font-size:8.5px;font-weight:400;color:#1e1e1e;">Add Child</div><div class="ab" style="left:666.40px;top:525.50px;width:10.20px;height:177.00px;background:#fafafa;border-left:1px solid #e0e0e0"></div><div class="ab" style="left:688.00px;top:82.50px;width:272.00px;height:630.50px;background:#efefef"></div><div class="ab" style="left:681.30px;top:412.80px;width:1.00px;height:293.50px;background:#a8a8a8"></div><div class="ab" style="left:688.20px;top:83.80px;width:265.50px;height:55.80px;background:linear-gradient(#b9c8d8,#a4b5c9 55%,#93a7bd);border:1px solid #8a9aae;border-bottom:1px solid #7f8fa3"></div><svg style="left:692.40px;top:88.00px;" width="35.40" height="45.60" viewBox="0 0 35.40 45.60"><defs><radialGradient id="fc" cx=".45" cy=".35" r=".6"><stop offset="0" stop-color="#f2f2f2"/><stop offset=".55" stop-color="#d6d6d6"/><stop offset="1" stop-color="#9a9a9a"/></radialGradient><linearGradient id="jk" x1="0" y1="0" x2="1" y2="0"><stop offset="0" stop-color="#2a2a2a"/><stop offset=".6" stop-color="#6a6a6a"/><stop offset="1" stop-color="#888"/></linearGradient></defs><rect width="35.4" height="45.6" fill="#161515"/><path d="M3 45.6C4 39 9 36 17 36S31 38 35.4 43V45.6z" fill="url(#jk)"/><path d="M11 36.5L16 45.6H23L22 36z" fill="#ececec"/><path d="M7.5 16C7 6 12 3.5 18 3.5S29.5 6.5 29 17C29.5 21 29 26 27 31 24.5 36.5 21 38 17.5 38S10 36 8.5 30C7 25 7.5 20 7.5 16z" fill="url(#fc)"/><ellipse cx="6.8" cy="21" rx="1.8" ry="3.5" fill="#b8b8b8"/><ellipse cx="29.8" cy="21" rx="1.6" ry="3.2" fill="#a8a8a8"/><path d="M11.5 18.5c1.5-1 3.5-1 5 0M20.5 18.5c1.5-1 3.5-1 5 0" stroke="#5a5a5a" stroke-width="1.6" fill="none"/><path d="M17.8 20v5.5" stroke="#8a8a8a" stroke-width="1.4"/><path d="M10.5 28.5c2.5-2 5.5-2.5 7.5-1.5 2-1 5.5-.5 8 1.5-1.5 2.5-5 3-8 2.5-3 .5-6 0-7.5-2.5z" fill="#fafafa"/><path d="M14 32.5c2 .8 6 .8 8 0" stroke="#9a9a9a" stroke-width="1" fill="none"/></svg><div class="t" style="left:733.60px;top:87px;font-size:10px;font-weight:400;color:#141414;transform:scaleX(0.948);">James Clarence Bobbitt</div><div class="t" style="left:737.20px;top:107px;font-size:8.6px;font-weight:400;color:#1e1e1e;transform:scaleX(0.946);">Home person</div><svg style="left:927.70px;top:87.50px;" width="10.00" height="9.00" viewBox="0 0 10.00 9.00"><path d="M0.8 8.5C0.5 3.5 4 0.5 9.3 0.8 9.3 6 6 8.8 0.8 8.5z" fill="#5aa030"/><path d="M1.3 8C3 6 5.5 3.5 8.3 1.8" stroke="#b8e090" stroke-width=".7" fill="none"/></svg><div class="ab" style="left:688.20px;top:139.60px;width:265.50px;height:20.80px;background:linear-gradient(#fafafa,#f0f0f0);border:1px solid #b0b0b0;border-top:none"></div><div class="ab" style="left:689.20px;top:139.60px;width:21.00px;height:19.80px;background:linear-gradient(#d6d6d6,#c8c8c8)"></div><div class="ab" style="left:709.50px;top:139.60px;width:0.80px;height:20.00px;background:#c8c8c8"></div><div class="ab" style="left:730.50px;top:139.60px;width:0.80px;height:20.00px;background:#c8c8c8"></div><div class="ab" style="left:751.50px;top:139.60px;width:0.80px;height:20.00px;background:#c8c8c8"></div><div class="ab" style="left:772.50px;top:139.60px;width:0.80px;height:20.00px;background:#c8c8c8"></div><svg style="left:691.50px;top:142.00px;" width="15.00" height="14.00" viewBox="0 0 15.00 14.00"><rect x="1" y="2" width="12" height="10" rx="1" fill="#dbe8f6" stroke="#6a8ab0" stroke-width=".8"/><path d="M3 10l7-7 2 2-7 7H3z" fill="#e8a848"/><path d="M3 10v2h2" fill="#333"/></svg><svg style="left:712.50px;top:142.50px;" width="15.00" height="14.00" viewBox="0 0 15.00 14.00"><path d="M1 3l7-2 4 2v9l-7 2-4-2z" fill="#a83028"/><circle cx="8" cy="8" r="2.5" fill="#e8d8b8"/><circle cx="8" cy="8" r="1.2" fill="#5a4a3a"/></svg><svg style="left:733.50px;top:143.00px;" width="15.00" height="13.00" viewBox="0 0 15.00 13.00"><rect x="1" y="1" width="7" height="10" fill="#c8a878" stroke="#8a6a4a" stroke-width=".5"/><rect x="5" y="3" width="7" height="10" fill="#d8b888" stroke="#8a6a4a" stroke-width=".5"/></svg><svg style="left:754.50px;top:142.50px;" width="14.00" height="14.00" viewBox="0 0 14.00 14.00"><rect x="2" y="2" width="9" height="11" rx="1" fill="#fff" stroke="#5a5a5a" stroke-width=".9"/><rect x="4" y="0.8" width="5" height="2.5" fill="#d8b040" stroke="#7a6a2a" stroke-width=".5"/></svg><div class="t" style="left:701.10px;top:172px;font-size:8.6px;font-weight:400;color:#2a2a2a;transform:scaleX(0.932);">Name:</div><div class="ab" style="left:729.70px;top:169.90px;width:202.70px;height:12.60px;background:#fff;border:1px solid #a6a6a6;border-top-color:#8e8e8e;box-shadow:inset 0 1px 1px rgba(0,0,0,.08)"></div><div class="t" style="left:732.70px;top:173px;font-size:8.6px;font-weight:400;color:#1e1e1e;transform:scaleX(0.942);">James Clarence Bobbitt</div><div class="ab" style="left:937.50px;top:168.30px;width:15.80px;height:14.60px;border-radius:3px;background:linear-gradient(#fafafa,#d4d4d4);border:1px solid #8a8a8a"></div><svg style="left:939.50px;top:170.50px;" width="12.00" height="10.00" viewBox="0 0 12.00 10.00"><path d="M1.5 4l3-3 2 6 3-1-2 3.5h-5z" fill="#c8b890" stroke="#6a5a3a" stroke-width=".6"/><path d="M7.5 1.5l3 2.5-2 .5z" fill="#3a3a3a"/></svg><div class="t" style="left:709.20px;top:190px;font-size:8.6px;font-weight:400;color:#2a2a2a;transform:scaleX(0.901);">Sex:</div><div class="ab" style="left:729.70px;top:188.60px;width:61.10px;height:11.60px;border-radius:3px;background:linear-gradient(#fcfcfc,#dedede);border:1px solid #979797"></div><div class="t" style="left:734.80px;top:191px;font-size:8.6px;font-weight:400;color:#1e1e1e;transform:scaleX(0.907);">Male</div><svg style="left:784.20px;top:190.30px;" width="5.00" height="8.00" viewBox="0 0 5.00 8.00"><path d="M0 3l2.5-3 2.5 3zM0 5l2.5 3 2.5-3z" fill="#333"/></svg><div class="t" style="left:802.90px;top:190px;font-size:8.6px;font-weight:400;color:#1e1e1e;transform:scaleX(0.940);">Age:&nbsp; 70</div><div class="t" style="left:704.70px;top:210px;font-size:8.6px;font-weight:400;color:#2a2a2a;transform:scaleX(0.997);">Birth:</div><div class="ab" style="left:729.70px;top:207.50px;width:202.70px;height:12.70px;background:#fff;border:1px solid #a6a6a6;border-top-color:#8e8e8e;box-shadow:inset 0 1px 1px rgba(0,0,0,.08)"></div><div class="t" style="left:732.70px;top:210px;font-size:8.6px;font-weight:400;color:#1e1e1e;transform:scaleX(0.970);">28 Jul 1858</div><div class="ab" style="left:937.50px;top:206.50px;width:15.80px;height:14.60px;border-radius:3px;background:linear-gradient(#fafafa,#d4d4d4);border:1px solid #8a8a8a"></div><svg style="left:939.50px;top:208.70px;" width="12.00" height="10.00" viewBox="0 0 12.00 10.00"><path d="M1.5 4l3-3 2 6 3-1-2 3.5h-5z" fill="#c8b890" stroke="#6a5a3a" stroke-width=".6"/></svg><div class="ab" style="left:729.70px;top:226.20px;width:202.70px;height:12.40px;background:#fff;border:1px solid #a6a6a6;border-top-color:#8e8e8e;box-shadow:inset 0 1px 1px rgba(0,0,0,.08)"></div><div class="t" style="left:732.70px;top:229px;font-size:8.6px;font-weight:400;color:#1e1e1e;transform:scaleX(0.939);">Illinois, USA</div><div class="t" style="left:700.20px;top:247px;font-size:8.6px;font-weight:400;color:#2a2a2a;transform:scaleX(0.967);">Death:</div><div class="ab" style="left:729.70px;top:245.20px;width:202.70px;height:12.30px;background:#fff;border:1px solid #a6a6a6;border-top-color:#8e8e8e;box-shadow:inset 0 1px 1px rgba(0,0,0,.08)"></div><div class="t" style="left:732.70px;top:248px;font-size:8.6px;font-weight:400;color:#1e1e1e;transform:scaleX(0.941);">02 Jun 1929</div><div class="ab" style="left:937.50px;top:244.20px;width:15.80px;height:14.60px;border-radius:3px;background:linear-gradient(#fafafa,#d4d4d4);border:1px solid #8a8a8a"></div><svg style="left:939.50px;top:246.40px;" width="12.00" height="10.00" viewBox="0 0 12.00 10.00"><path d="M1.5 4l3-3 2 6 3-1-2 3.5h-5z" fill="#c8b890" stroke="#6a5a3a" stroke-width=".6"/></svg><div class="ab" style="left:729.70px;top:263.90px;width:202.70px;height:12.30px;background:#fff;border:1px solid #a6a6a6;border-top-color:#8e8e8e;box-shadow:inset 0 1px 1px rgba(0,0,0,.08)"></div><div class="t" style="left:732.70px;top:266px;font-size:8.6px;font-weight:400;color:#1e1e1e;transform:scaleX(0.934);">Balko, Beaver, Oklahoma, USA</div><div class="ab" style="left:688.60px;top:286.20px;width:264.50px;height:11.70px;border-radius:3px;background:linear-gradient(#fdfdfd,#e4e4e4 50%,#d0d0d0);border:1px solid #8e8e8e"></div><div class="t" style="left:741.10px;top:288px;font-size:8.6px;font-weight:400;color:#1e1e1e;transform:scaleX(0.955);">Marriage to Margaret Rebecca Shanklin</div><svg style="left:936.50px;top:286.50px;" width="14.00" height="11.00" viewBox="0 0 14.00 11.00"><path d="M2 1l6-1 4 2v8l-6 1-4-2z" fill="#a83028"/><circle cx="8" cy="6" r="2.4" fill="#e8d8b8"/><circle cx="8" cy="6" r="1.1" fill="#5a4a3a"/></svg><div class="t" style="left:705.20px;top:311px;font-size:8.6px;font-weight:400;color:#2a2a2a;transform:scaleX(0.972);">Marr:</div><div class="ab" style="left:730.30px;top:308.40px;width:202.20px;height:12.60px;background:#fff;border:1px solid #a6a6a6;border-top-color:#8e8e8e;box-shadow:inset 0 1px 1px rgba(0,0,0,.08)"></div><div class="t" style="left:733.30px;top:311px;font-size:8.6px;font-weight:400;color:#1e1e1e;transform:scaleX(0.961);">20 Feb 1882</div><div class="ab" style="left:937.50px;top:307.20px;width:15.80px;height:14.60px;border-radius:3px;background:linear-gradient(#fafafa,#d4d4d4);border:1px solid #8a8a8a"></div><svg style="left:939.50px;top:309.40px;" width="12.00" height="10.00" viewBox="0 0 12.00 10.00"><path d="M1.5 4l3-3 2 6 3-1-2 3.5h-5z" fill="#c8b890" stroke="#6a5a3a" stroke-width=".6"/></svg><div class="ab" style="left:730.30px;top:327.20px;width:202.20px;height:12.40px;background:#fff;border:1px solid #a6a6a6;border-top-color:#8e8e8e;box-shadow:inset 0 1px 1px rgba(0,0,0,.08)"></div><div class="t" style="left:733.30px;top:330px;font-size:8.6px;font-weight:400;color:#1e1e1e;transform:scaleX(0.963);">Marshall County, Illinois, USA</div><div class="ab" style="left:688.20px;top:657.70px;width:265.30px;height:48.30px;background:#d8d8d8;border-top:1px solid #c8c8c8"></div><div class="ab" style="left:688.20px;top:685.80px;width:265.30px;height:1.00px;background:#a8a8a8"></div><div class="ab" style="left:688.20px;top:686.80px;width:265.30px;height:19.20px;background:linear-gradient(#d8d8d8,#d0d0d0)"></div><div class="t" style="left:693.10px;top:662px;font-size:8.6px;font-weight:400;color:#1e1e1e;transform:scaleX(0.940);">Next:&nbsp; Margaret Rebecca Shanklin</div><div class="t" style="left:693.10px;top:674px;font-size:8.6px;font-weight:400;color:#1e1e1e;transform:scaleX(0.987);">Press Ctrl+Enter to add or edit next person</div><div class="ab" style="left:934.3px;top:662.3px;width:12.4px;height:12.4px;border-radius:50%;background:linear-gradient(#fff,#e4e4e4);border:1px solid #9a9a9a"></div><svg style="left:937.30px;top:666.50px;" width="7.00" height="5.00" viewBox="0 0 7.00 5.00"><path d="M0.8 0.8l2.7 2.7 2.7-2.7" stroke="#1a1a1a" stroke-width="1.4" fill="none"/></svg><div class="ab" style="left:776.80px;top:690.40px;width:89.80px;height:12.20px;border-radius:3px;background:linear-gradient(#fdfdfd,#e2e2e2);border:1px solid #8a8a8a"></div><div class="t" style="left:788.45px;top:693px;font-size:8.6px;font-weight:400;color:#1e1e1e;transform:scaleX(0.976);">Customize View...</div><svg style="left:948.00px;top:702.00px;" width="10.00" height="10.00" viewBox="0 0 10.00 10.00"><path d="M9 3L3 9M9 6L6 9" stroke="#9a9a9a" stroke-width=".8"/></svg></body></html>
